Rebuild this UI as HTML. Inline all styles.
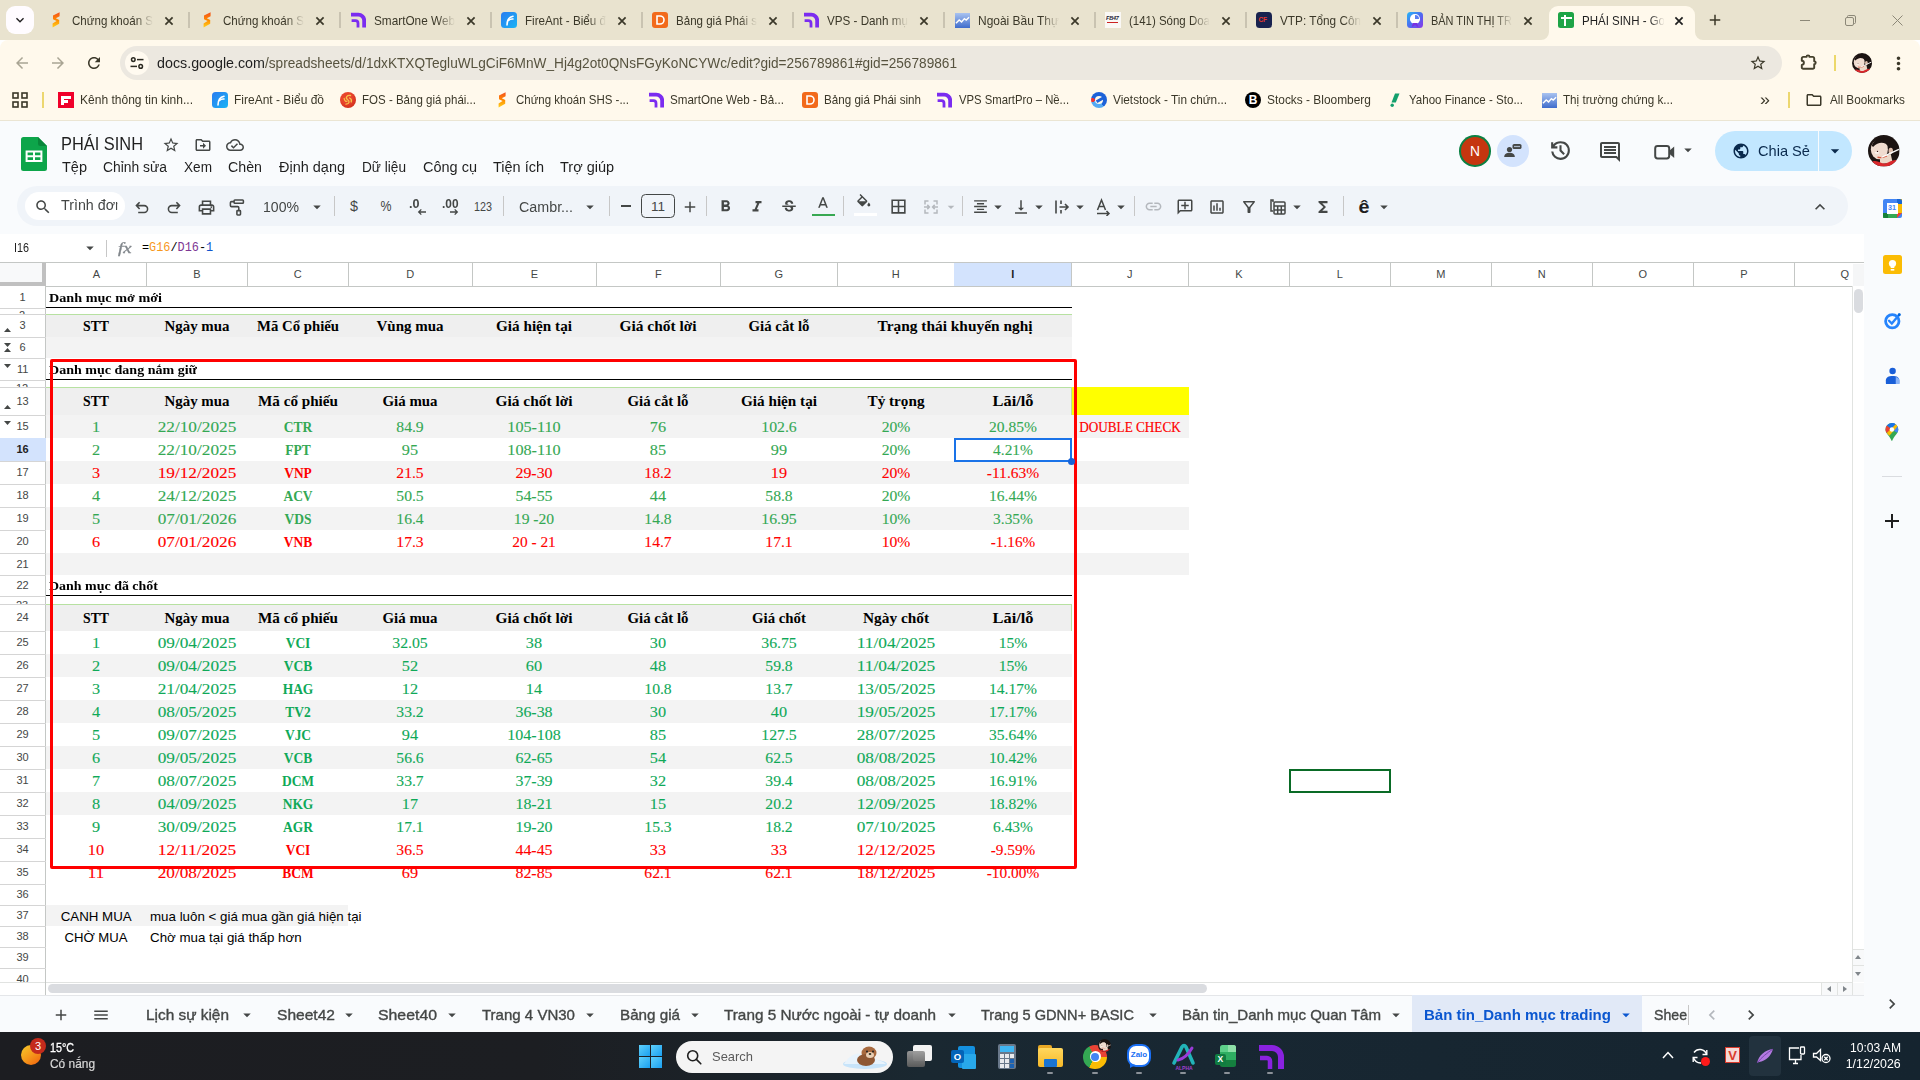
<!DOCTYPE html><html><head><meta charset="utf-8"><title>PHÁI SINH - Google Trang tính</title><style>html,body{margin:0;padding:0}body{width:1920px;height:1080px;overflow:hidden;position:relative;background:#fff;font-family:"Liberation Sans",sans-serif}.t{position:absolute;white-space:nowrap;line-height:1;display:block}</style></head><body><div style="position:absolute;left:0px;top:0px;width:1920px;height:40px;background:#e9e3cf"></div><div style="position:absolute;left:6px;top:6px;width:28px;height:28px;background:#fffcff;border-radius:9px"></div><svg style="position:absolute;left:12.0px;top:12.0px" width="16" height="16" viewBox="0 0 24 24" fill="#1f1f1f" ><path d="M16.59 8.59L12 13.17 7.41 8.59 6 10l6 6 6-6z"/></svg><svg style="position:absolute;left:48px;top:12px" width="16" height="16" viewBox="0 0 16 16"><defs><linearGradient id="sg48" x1="0" y1="0" x2="0" y2="1"><stop offset="0" stop-color="#f4511e"/><stop offset=".5" stop-color="#ff8a00"/><stop offset="1" stop-color="#ffd21f"/></linearGradient></defs><path d="M11.6 0.3 L5 3.6 V7.2 L8.6 8.9 L4.6 11.4 V15.6 L11.2 11.8 V8 L7.8 6.3 L11.6 4.2z" fill="url(#sg48)"/></svg><span class="t" style="font-family:'Liberation Sans',sans-serif;font-size:12.8px;font-weight:400;color:#3b3829;left:72px;top:14.9px;transform-origin:0 50%;transform:scaleX(0.903);padding:5px 0;margin-top:-5px;-webkit-mask-image:linear-gradient(90deg,#000 78%,transparent 100%);">Chứng khoán S</span><svg style="position:absolute;left:164px;top:15.5px" width="10" height="10" viewBox="164 15.5 10 10" ><path d="M165.4 16.9L172.6 24.1M172.6 16.9L165.4 24.1" stroke="#3b3829" stroke-width="1.7" fill="none"/></svg><div style="position:absolute;left:188px;top:12px;width:1.5px;height:16px;background:#c9c3b1"></div><svg style="position:absolute;left:199px;top:12px" width="16" height="16" viewBox="0 0 16 16"><defs><linearGradient id="sg199" x1="0" y1="0" x2="0" y2="1"><stop offset="0" stop-color="#f4511e"/><stop offset=".5" stop-color="#ff8a00"/><stop offset="1" stop-color="#ffd21f"/></linearGradient></defs><path d="M11.6 0.3 L5 3.6 V7.2 L8.6 8.9 L4.6 11.4 V15.6 L11.2 11.8 V8 L7.8 6.3 L11.6 4.2z" fill="url(#sg199)"/></svg><span class="t" style="font-family:'Liberation Sans',sans-serif;font-size:12.8px;font-weight:400;color:#3b3829;left:223px;top:14.9px;transform-origin:0 50%;transform:scaleX(0.903);padding:5px 0;margin-top:-5px;-webkit-mask-image:linear-gradient(90deg,#000 78%,transparent 100%);">Chứng khoán S</span><svg style="position:absolute;left:315px;top:15.5px" width="10" height="10" viewBox="315 15.5 10 10" ><path d="M316.4 16.9L323.6 24.1M323.6 16.9L316.4 24.1" stroke="#3b3829" stroke-width="1.7" fill="none"/></svg><div style="position:absolute;left:339px;top:12px;width:1.5px;height:16px;background:#c9c3b1"></div><svg style="position:absolute;left:350px;top:12px" width="16" height="16" viewBox="0 0 16 16" fill="none" stroke="#7b2cf0"><path d="M1 2.6 H8.2 a6 6 0 0 1 6 6 V15.5" stroke-width="3.9"/><path d="M1.6 8.6 H5.4 a2.6 2.6 0 0 1 2.6 2.6 V15.5" stroke-width="2.8"/></svg><span class="t" style="font-family:'Liberation Sans',sans-serif;font-size:12.8px;font-weight:400;color:#3b3829;left:374px;top:14.9px;transform-origin:0 50%;transform:scaleX(0.921);padding:5px 0;margin-top:-5px;-webkit-mask-image:linear-gradient(90deg,#000 78%,transparent 100%);">SmartOne Web</span><svg style="position:absolute;left:466px;top:15.5px" width="10" height="10" viewBox="466 15.5 10 10" ><path d="M467.4 16.9L474.6 24.1M474.6 16.9L467.4 24.1" stroke="#3b3829" stroke-width="1.7" fill="none"/></svg><div style="position:absolute;left:490px;top:12px;width:1.5px;height:16px;background:#c9c3b1"></div><div style="position:absolute;left:501px;top:12px;width:16px;height:16px;border-radius:3.5px;background:linear-gradient(135deg,#2a7cf0,#19b4f5)"><svg width="16" height="16" viewBox="0 0 16 16" fill="none" stroke="#fff" stroke-width="1.6" stroke-linecap="round"><path d="M6 13 C6 8 8 5 12 4.2"/><path d="M7.5 8.5 C9 7 10.5 6.8 12 7"/></svg></div><span class="t" style="font-family:'Liberation Sans',sans-serif;font-size:12.8px;font-weight:400;color:#3b3829;left:525px;top:14.9px;transform-origin:0 50%;transform:scaleX(0.911);padding:5px 0;margin-top:-5px;-webkit-mask-image:linear-gradient(90deg,#000 78%,transparent 100%);">FireAnt - Biểu đ</span><svg style="position:absolute;left:617px;top:15.5px" width="10" height="10" viewBox="617 15.5 10 10" ><path d="M618.4 16.9L625.6 24.1M625.6 16.9L618.4 24.1" stroke="#3b3829" stroke-width="1.7" fill="none"/></svg><div style="position:absolute;left:641px;top:12px;width:1.5px;height:16px;background:#c9c3b1"></div><div style="position:absolute;left:652px;top:12px;width:16px;height:16px;border-radius:3px;background:#f26a1b"><svg width="16" height="16" viewBox="0 0 16 16" fill="none" stroke="#fff" stroke-width="1.6"><path d="M5 4 H8 a4 4 0 0 1 0 8 H5 z"/></svg></div><span class="t" style="font-family:'Liberation Sans',sans-serif;font-size:12.8px;font-weight:400;color:#3b3829;left:676px;top:14.9px;transform-origin:0 50%;transform:scaleX(0.903);padding:5px 0;margin-top:-5px;-webkit-mask-image:linear-gradient(90deg,#000 78%,transparent 100%);">Bảng giá Phái s</span><svg style="position:absolute;left:768px;top:15.5px" width="10" height="10" viewBox="768 15.5 10 10" ><path d="M769.4 16.9L776.6 24.1M776.6 16.9L769.4 24.1" stroke="#3b3829" stroke-width="1.7" fill="none"/></svg><div style="position:absolute;left:792px;top:12px;width:1.5px;height:16px;background:#c9c3b1"></div><svg style="position:absolute;left:803px;top:12px" width="16" height="16" viewBox="0 0 16 16" fill="none" stroke="#7b2cf0"><path d="M1 2.6 H8.2 a6 6 0 0 1 6 6 V15.5" stroke-width="3.9"/><path d="M1.6 8.6 H5.4 a2.6 2.6 0 0 1 2.6 2.6 V15.5" stroke-width="2.8"/></svg><span class="t" style="font-family:'Liberation Sans',sans-serif;font-size:12.8px;font-weight:400;color:#3b3829;left:827px;top:14.9px;transform-origin:0 50%;transform:scaleX(0.911);padding:5px 0;margin-top:-5px;-webkit-mask-image:linear-gradient(90deg,#000 78%,transparent 100%);">VPS - Danh mụ</span><svg style="position:absolute;left:919px;top:15.5px" width="10" height="10" viewBox="919 15.5 10 10" ><path d="M920.4 16.9L927.6 24.1M927.6 16.9L920.4 24.1" stroke="#3b3829" stroke-width="1.7" fill="none"/></svg><div style="position:absolute;left:943px;top:12px;width:1.5px;height:16px;background:#c9c3b1"></div><div style="position:absolute;left:954.5px;top:12.5px;width:15px;height:15px;background:linear-gradient(180deg,#a9c3f0 0%,#3f6ccc 100%)"><svg width="15" height="15" viewBox="0 0 16 16" fill="none" stroke="#fff" stroke-width="1.5"><path d="M1 11 L4.5 7.5 L7 9.5 L10 6 L12 7.5 L15 4.5"/></svg></div><span class="t" style="font-family:'Liberation Sans',sans-serif;font-size:12.8px;font-weight:400;color:#3b3829;left:978px;top:14.9px;transform-origin:0 50%;transform:scaleX(0.935);padding:5px 0;margin-top:-5px;-webkit-mask-image:linear-gradient(90deg,#000 78%,transparent 100%);">Ngoài Bầu Thự</span><svg style="position:absolute;left:1070px;top:15.5px" width="10" height="10" viewBox="1070 15.5 10 10" ><path d="M1071.4 16.9L1078.6 24.1M1078.6 16.9L1071.4 24.1" stroke="#3b3829" stroke-width="1.7" fill="none"/></svg><div style="position:absolute;left:1094px;top:12px;width:1.5px;height:16px;background:#c9c3b1"></div><div style="position:absolute;left:1105px;top:12px;width:16px;height:16px;background:#faf8f5"><div style="position:absolute;left:1px;top:4px;width:14px;height:5px;font:bold 5.5px/5px 'Liberation Sans',sans-serif;color:#223;letter-spacing:-.2px;font-style:italic">FB47</div><div style="position:absolute;left:1.5px;top:10px;width:11px;height:1.3px;background:#c22"></div></div><span class="t" style="font-family:'Liberation Sans',sans-serif;font-size:12.8px;font-weight:400;color:#3b3829;left:1129px;top:14.9px;transform-origin:0 50%;transform:scaleX(0.896);padding:5px 0;margin-top:-5px;-webkit-mask-image:linear-gradient(90deg,#000 78%,transparent 100%);">(141) Sóng Doa</span><svg style="position:absolute;left:1221px;top:15.5px" width="10" height="10" viewBox="1221 15.5 10 10" ><path d="M1222.4 16.9L1229.6 24.1M1229.6 16.9L1222.4 24.1" stroke="#3b3829" stroke-width="1.7" fill="none"/></svg><div style="position:absolute;left:1245px;top:12px;width:1.5px;height:16px;background:#c9c3b1"></div><div style="position:absolute;left:1256px;top:12px;width:16px;height:16px;border-radius:3.5px;background:#18224f"><div style="position:absolute;left:2.5px;top:5px;width:11px;height:6px;font:bold 6.5px/6px 'Liberation Sans',sans-serif;color:#e8392f;letter-spacing:-.2px">CF</div></div><span class="t" style="font-family:'Liberation Sans',sans-serif;font-size:12.8px;font-weight:400;color:#3b3829;left:1280px;top:14.9px;transform-origin:0 50%;transform:scaleX(0.921);padding:5px 0;margin-top:-5px;-webkit-mask-image:linear-gradient(90deg,#000 78%,transparent 100%);">VTP: Tổng Côn</span><svg style="position:absolute;left:1372px;top:15.5px" width="10" height="10" viewBox="1372 15.5 10 10" ><path d="M1373.4 16.9L1380.6 24.1M1380.6 16.9L1373.4 24.1" stroke="#3b3829" stroke-width="1.7" fill="none"/></svg><div style="position:absolute;left:1396px;top:12px;width:1.5px;height:16px;background:#c9c3b1"></div><div style="position:absolute;left:1407px;top:12px;width:16px;height:16px;border-radius:3.5px;background:linear-gradient(135deg,#25b9f6 0%,#4d6cf0 50%,#8a35e8 100%)"><div style="position:absolute;left:3.2px;top:2px;width:9.6px;height:9.6px;border-radius:50%;background:#fff"></div><div style="position:absolute;left:8px;top:2.8px;width:4px;height:4px;border-radius:0 4px 0 0;background:#5a7df2"></div><div style="position:absolute;left:4.5px;top:11px;width:7px;height:4.5px;background:#7a30e0;clip-path:polygon(20% 0,80% 0,100% 100%,50% 45%,0 100%)"></div></div><span class="t" style="font-family:'Liberation Sans',sans-serif;font-size:12.8px;font-weight:400;color:#3b3829;left:1431px;top:14.9px;transform-origin:0 50%;transform:scaleX(0.856);padding:5px 0;margin-top:-5px;-webkit-mask-image:linear-gradient(90deg,#000 78%,transparent 100%);">BẢN TIN THỊ TR</span><svg style="position:absolute;left:1523px;top:15.5px" width="10" height="10" viewBox="1523 15.5 10 10" ><path d="M1524.4 16.9L1531.6 24.1M1531.6 16.9L1524.4 24.1" stroke="#3b3829" stroke-width="1.7" fill="none"/></svg><div style="position:absolute;left:1549px;top:6px;width:146px;height:34px;background:#fff9ec;border-radius:9px 9px 0 0"></div><svg style="position:absolute;left:1541px;top:32px" width="8" height="8"><path d="M8 0 V8 H0 A8 8 0 0 0 8 0z" fill="#fff9ec"/></svg><svg style="position:absolute;left:1695px;top:32px" width="8" height="8"><path d="M0 0 V8 H8 A8 8 0 0 1 0 0z" fill="#fff9ec"/></svg><div style="position:absolute;left:1558px;top:12px;width:16px;height:16px;border-radius:2.5px;background:#1ea446"><div style="position:absolute;left:2.5px;top:5px;width:11px;height:2.2px;background:#fff"></div><div style="position:absolute;left:6.2px;top:2.5px;width:2.2px;height:11px;background:#fff"></div></div><span class="t" style="font-family:'Liberation Sans',sans-serif;font-size:12.8px;font-weight:400;color:#1f1f1f;left:1582px;top:14.9px;transform-origin:0 50%;transform:scaleX(0.898);padding:5px 0;margin-top:-5px;-webkit-mask-image:linear-gradient(90deg,#000 82%,transparent 100%);">PHÁI SINH - Go</span><svg style="position:absolute;left:1674px;top:15.5px" width="10" height="10" viewBox="1674 15.5 10 10" ><path d="M1675.4 16.9L1682.6 24.1M1682.6 16.9L1675.4 24.1" stroke="#1f1f1f" stroke-width="1.7" fill="none"/></svg><svg style="position:absolute;left:1706.0px;top:11.0px" width="18" height="18" viewBox="0 0 24 24" fill="#3b3829" ><path d="M19 13h-6v6h-2v-6H5v-2h6V5h2v6h6v2z"/></svg><div style="position:absolute;left:1800px;top:19.5px;width:10px;height:1px;background:#8c8878"></div><svg style="position:absolute;left:1845px;top:15px" width="11" height="11" fill="none" stroke="#8c8878" stroke-width="1"><rect x="0.5" y="2.5" width="8" height="8" rx="1.5"/><path d="M2.5 2.5 V1.5 a1 1 0 0 1 1 -1 H9 a1.5 1.5 0 0 1 1.5 1.5 V7.5 a1 1 0 0 1 -1 1 H8.5"/></svg><svg style="position:absolute;left:1892px;top:15px" width="11" height="11" fill="none" stroke="#8c8878" stroke-width="1"><path d="M0.5 0.5 L10.5 10.5 M10.5 0.5 L0.5 10.5"/></svg><div style="position:absolute;left:0px;top:40px;width:1920px;height:80px;background:#fff9ec;border-radius:8px 8px 0 0"></div><svg style="position:absolute;left:13.0px;top:54.0px" width="18" height="18" viewBox="0 0 24 24" fill="#a9a594" ><path d="M20 11H7.83l5.59-5.59L12 4l-8 8 8 8 1.41-1.41L7.83 13H20v-2z"/></svg><svg style="position:absolute;left:49.0px;top:54.0px" width="18" height="18" viewBox="0 0 24 24" fill="#a9a594" ><path d="M12 4l-1.41 1.41L16.17 11H4v2h12.17l-5.58 5.59L12 20l8-8z"/></svg><svg style="position:absolute;left:85.0px;top:54.0px" width="18" height="18" viewBox="0 0 24 24" fill="#3b3829" ><path d="M17.65 6.35C16.2 4.9 14.21 4 12 4c-4.42 0-7.99 3.58-7.99 8s3.57 8 7.99 8c3.73 0 6.84-2.55 7.73-6h-2.08c-.82 2.33-3.04 4-5.65 4-3.31 0-6-2.69-6-6s2.69-6 6-6c1.66 0 3.14.69 4.22 1.78L13 11h7V4l-2.35 2.35z"/></svg><div style="position:absolute;left:120px;top:46px;width:1662px;height:34px;background:#ece8e0;border-radius:17px"></div><div style="position:absolute;left:125px;top:51px;width:24px;height:24px;background:#fffaf0;border-radius:12px"></div><svg style="position:absolute;left:129px;top:55px" width="16" height="16" viewBox="0 0 16 16" fill="none" stroke="#2b2a22" stroke-width="1.5"><circle cx="4.3" cy="4.6" r="1.8"/><path d="M8 4.6H14.5"/><circle cx="11.7" cy="11.4" r="1.8"/><path d="M1.5 11.4H8"/></svg><span class="t" style="font-family:'Liberation Sans',sans-serif;font-size:14px;font-weight:400;color:#1f1f1f;left:157px;top:56.4px;transform-origin:0 50%;transform:scaleX(1.020);">docs.google.com</span><span class="t" style="font-family:'Liberation Sans',sans-serif;font-size:14px;font-weight:400;color:#57533f;left:265px;top:56.4px;transform-origin:0 50%;transform:scaleX(0.975);">/spreadsheets/d/1dxKTXQTegluWLgCiF6MnW_Hj4g2ot0QNsFGyKoNCYWc/edit?gid=256789861#gid=256789861</span><svg style="position:absolute;left:1749.0px;top:54.0px" width="18" height="18" viewBox="0 0 24 24" fill="#3b3829" ><path d="M22 9.24l-7.19-.62L12 2 9.19 8.63 2 9.24l5.46 4.73L5.82 21 12 17.27 18.18 21l-1.63-7.03L22 9.24zM12 15.4l-3.76 2.27 1-4.28-3.32-2.88 4.38-.38L12 6.1l1.71 4.04 4.38.38-3.32 2.88 1 4.28L12 15.4z"/></svg><svg style="position:absolute;left:1799px;top:52px" width="20" height="20" viewBox="1799 52 20 20" ><path d="M1803.2 56.9H1806.5A1.5 1.5 0 0 1 1809.5 56.9H1812.8A1.4 1.4 0 0 1 1814.2 58.3V61.3A1.5 1.5 0 0 1 1814.2 64.3V67.4A1.4 1.4 0 0 1 1812.8 68.8H1803.2A1.4 1.4 0 0 1 1801.8 67.4V64.9A2.1 2.1 0 0 0 1801.8 60.7V58.3A1.4 1.4 0 0 1 1803.2 56.9z" fill="none" stroke="#45412d" stroke-width="1.9" stroke-linejoin="round"/></svg><div style="position:absolute;left:1834.2px;top:55px;width:1.5px;height:16px;background:#ecd86a"></div><svg style="position:absolute;left:1852px;top:53px" width="20" height="20" viewBox="0 0 100 100"><defs><clipPath id="av1862_63"><circle cx="50" cy="50" r="50"/></clipPath></defs><g clip-path="url(#av1862_63)"><rect width="100" height="100" fill="#1d1513"/><ellipse cx="36" cy="46" rx="27" ry="31" fill="#f0dcd0"/><path d="M12 34 C22 4 70 -6 92 28 C102 48 100 66 88 76 C84 58 76 40 56 28 C44 22 30 24 16 38z" fill="#1b1311"/><ellipse cx="72" cy="50" rx="7" ry="10" fill="#dcbcaa"/><path d="M38 66 L72 60 L78 88 L38 92z" fill="#ecd8c8"/><path d="M10 86 C28 74 42 94 56 90 C68 86 80 76 94 80 L100 100 L0 100z" fill="#da282c"/><path d="M30 70 C42 74 52 70 60 66" stroke="#d9583f" stroke-width="4" fill="none"/><path d="M44 70 L96 46" stroke="#fdfdfd" stroke-width="4.5" stroke-linecap="round"/><ellipse cx="28" cy="56" rx="7" ry="3" fill="#fbf3ee"/><circle cx="30" cy="52" r="2" fill="#3a1a1a"/></g></svg><svg style="position:absolute;left:1887.5px;top:52.5px" width="21" height="21" viewBox="0 0 24 24" fill="#3b3829" ><path d="M12 8c1.1 0 2-.9 2-2s-.9-2-2-2-2 .9-2 2 .9 2 2 2zm0 2c-1.1 0-2 .9-2 2s.9 2 2 2 2-.9 2-2-.9-2-2-2zm0 6c-1.1 0-2 .9-2 2s.9 2 2 2 2-.9 2-2-.9-2-2-2z"/></svg><svg style="position:absolute;left:12px;top:92px" width="16" height="16" viewBox="0 0 16 16" fill="none" stroke="#3b3829" stroke-width="1.6"><rect x="1" y="1" width="5" height="5"/><rect x="10" y="1" width="5" height="5"/><rect x="1" y="10" width="5" height="5"/><rect x="10" y="10" width="5" height="5"/></svg><div style="position:absolute;left:42px;top:92px;width:1.5px;height:16px;background:#ecd76f"></div><div style="position:absolute;left:58px;top:92px;width:16px;height:16px;background:#f0002a"><div style="position:absolute;left:3px;top:3.5px;width:10px;height:3px;background:#fff"></div><div style="position:absolute;left:3px;top:3.5px;width:3.2px;height:9px;background:#fff"></div><div style="position:absolute;left:3px;top:8px;width:7px;height:2.6px;background:#fff"></div></div><span class="t" style="font-family:'Liberation Sans',sans-serif;font-size:12.8px;font-weight:400;color:#3b3829;left:80px;top:94.2px;transform-origin:0 50%;transform:scaleX(0.940);">Kênh thông tin kinh...</span><div style="position:absolute;left:212px;top:92px;width:16px;height:16px;border-radius:3.5px;background:linear-gradient(135deg,#2a7cf0,#19b4f5)"><svg width="16" height="16" viewBox="0 0 16 16" fill="none" stroke="#fff" stroke-width="1.6" stroke-linecap="round"><path d="M6 13 C6 8 8 5 12 4.2"/><path d="M7.5 8.5 C9 7 10.5 6.8 12 7"/></svg></div><span class="t" style="font-family:'Liberation Sans',sans-serif;font-size:12.8px;font-weight:400;color:#3b3829;left:234px;top:94.2px;transform-origin:0 50%;transform:scaleX(0.937);">FireAnt - Biểu đồ</span><div style="position:absolute;left:340px;top:92px;width:16px;height:16px;border-radius:50%;background:radial-gradient(circle at 40% 35%,#e8452c 0 40%,#c3200f 100%)"><svg width="16" height="16" viewBox="0 0 16 16" fill="none" stroke="#f6c34a" stroke-width="1.3" stroke-linecap="round"><path d="M10.5 3.5 C7 3 5 5.5 7.5 7.5 C10 9.3 9.5 12 6 12.2"/><path d="M4.2 6.5 C4.5 9 6 9.5 7 9.2M9.5 6 C11 6.5 11.8 8 11.2 10"/></svg></div><span class="t" style="font-family:'Liberation Sans',sans-serif;font-size:12.8px;font-weight:400;color:#3b3829;left:362px;top:94.2px;transform-origin:0 50%;transform:scaleX(0.900);">FOS - Bảng giá phái...</span><svg style="position:absolute;left:494px;top:92px" width="16" height="16" viewBox="0 0 16 16"><defs><linearGradient id="sg494" x1="0" y1="0" x2="0" y2="1"><stop offset="0" stop-color="#f4511e"/><stop offset=".5" stop-color="#ff8a00"/><stop offset="1" stop-color="#ffd21f"/></linearGradient></defs><path d="M11.6 0.3 L5 3.6 V7.2 L8.6 8.9 L4.6 11.4 V15.6 L11.2 11.8 V8 L7.8 6.3 L11.6 4.2z" fill="url(#sg494)"/></svg><span class="t" style="font-family:'Liberation Sans',sans-serif;font-size:12.8px;font-weight:400;color:#3b3829;left:516px;top:94.2px;transform-origin:0 50%;transform:scaleX(0.897);">Chứng khoán SHS -...</span><svg style="position:absolute;left:648px;top:92px" width="16" height="16" viewBox="0 0 16 16" fill="none" stroke="#7b2cf0"><path d="M1 2.6 H8.2 a6 6 0 0 1 6 6 V15.5" stroke-width="3.9"/><path d="M1.6 8.6 H5.4 a2.6 2.6 0 0 1 2.6 2.6 V15.5" stroke-width="2.8"/></svg><span class="t" style="font-family:'Liberation Sans',sans-serif;font-size:12.8px;font-weight:400;color:#3b3829;left:670px;top:94.2px;transform-origin:0 50%;transform:scaleX(0.907);">SmartOne Web - Bả...</span><div style="position:absolute;left:802px;top:92px;width:16px;height:16px;border-radius:3px;background:#f26a1b"><svg width="16" height="16" viewBox="0 0 16 16" fill="none" stroke="#fff" stroke-width="1.6"><path d="M5 4 H8 a4 4 0 0 1 0 8 H5 z"/></svg></div><span class="t" style="font-family:'Liberation Sans',sans-serif;font-size:12.8px;font-weight:400;color:#3b3829;left:824px;top:94.2px;transform-origin:0 50%;transform:scaleX(0.909);">Bảng giá Phái sinh</span><svg style="position:absolute;left:936px;top:92px" width="16" height="16" viewBox="0 0 16 16" fill="none" stroke="#7b2cf0"><path d="M1 2.6 H8.2 a6 6 0 0 1 6 6 V15.5" stroke-width="3.9"/><path d="M1.6 8.6 H5.4 a2.6 2.6 0 0 1 2.6 2.6 V15.5" stroke-width="2.8"/></svg><span class="t" style="font-family:'Liberation Sans',sans-serif;font-size:12.8px;font-weight:400;color:#3b3829;left:959px;top:94.2px;transform-origin:0 50%;transform:scaleX(0.884);">VPS SmartPro – Nề...</span><div style="position:absolute;left:1091px;top:92px;width:16px;height:16px;border-radius:50%;background:conic-gradient(#1d62d8 0 40%,#54a9f3 40% 70%,#e33 70% 80%,#1d62d8 80%)"><div style="position:absolute;left:4px;top:4px;width:8px;height:8px;border-radius:50%;background:#fff9ec"></div><div style="position:absolute;left:5px;top:6px;width:9px;height:3px;background:#1d62d8;transform:rotate(-30deg)"></div></div><span class="t" style="font-family:'Liberation Sans',sans-serif;font-size:12.8px;font-weight:400;color:#3b3829;left:1113px;top:94.2px;transform-origin:0 50%;transform:scaleX(0.923);">Vietstock - Tin chứn...</span><div style="position:absolute;left:1245px;top:92px;width:16px;height:16px;border-radius:50%;background:#000;color:#fff;font:bold 12px/16px 'Liberation Sans',sans-serif;text-align:center">B</div><span class="t" style="font-family:'Liberation Sans',sans-serif;font-size:12.8px;font-weight:400;color:#3b3829;left:1267px;top:94.2px;transform-origin:0 50%;transform:scaleX(0.931);">Stocks - Bloomberg</span><svg style="position:absolute;left:1387px;top:92px" width="16" height="16" viewBox="0 0 16 16"><path d="M8 1.5 H12.5 L8.8 10.5 H4.5z" fill="#14a06c"/><circle cx="5.2" cy="13.3" r="1.7" fill="#14a06c"/></svg><span class="t" style="font-family:'Liberation Sans',sans-serif;font-size:12.8px;font-weight:400;color:#3b3829;left:1409px;top:94.2px;transform-origin:0 50%;transform:scaleX(0.902);">Yahoo Finance - Sto...</span><div style="position:absolute;left:1541.5px;top:92.5px;width:15px;height:15px;background:linear-gradient(180deg,#a9c3f0 0%,#3f6ccc 100%)"><svg width="15" height="15" viewBox="0 0 16 16" fill="none" stroke="#fff" stroke-width="1.5"><path d="M1 11 L4.5 7.5 L7 9.5 L10 6 L12 7.5 L15 4.5"/></svg></div><span class="t" style="font-family:'Liberation Sans',sans-serif;font-size:12.8px;font-weight:400;color:#3b3829;left:1563px;top:94.2px;transform-origin:0 50%;transform:scaleX(0.910);">Thị trường chứng k...</span><span class="t" style="font-family:'Liberation Sans',sans-serif;font-size:17px;font-weight:400;color:#3b3829;left:1760px;top:90.5px;transform-origin:0 50%;transform:scaleX(1.056);">»</span><div style="position:absolute;left:1788px;top:92px;width:1.5px;height:16px;background:#ecd76f"></div><svg style="position:absolute;left:1805.0px;top:91.0px" width="18" height="18" viewBox="0 0 24 24" fill="#3b3829" ><path d="M9.17 6l2 2H20v10H4V6h5.17M10 4H4c-1.1 0-1.99.9-1.99 2L2 18c0 1.1.9 2 2 2h16c1.1 0 2-.9 2-2V8c0-1.1-.9-2-2-2h-8l-2-2z"/></svg><span class="t" style="font-family:'Liberation Sans',sans-serif;font-size:12.8px;font-weight:400;color:#3b3829;left:1830px;top:94.2px;transform-origin:0 50%;transform:scaleX(0.917);">All Bookmarks</span><div style="position:absolute;left:0px;top:120px;width:1920px;height:1px;background:#ebe5d3"></div><div style="position:absolute;left:0px;top:121px;width:1920px;height:911px;background:#f9fbfd"></div><svg style="position:absolute;left:21px;top:137px" width="26" height="34" viewBox="0 0 26 34"><path d="M2.5 0 H17 L26 9 V31.5 a2.5 2.5 0 0 1 -2.5 2.5 H2.5 A2.5 2.5 0 0 1 0 31.5 V2.5 A2.5 2.5 0 0 1 2.5 0z" fill="#0da54a"/><path d="M17 0 L26 9 H19.5 A2.5 2.5 0 0 1 17 6.5z" fill="#08873a"/><path d="M4.6 13.4 H21.4 V25 H4.6z M6.6 15.4 V18.2 H12 V15.4z M14 15.4 V18.2 H19.4 V15.4z M6.6 20.2 V23 H12 V20.2z M14 20.2 V23 H19.4 V20.2z" fill="#fff" fill-rule="evenodd"/></svg><span class="t" style="font-family:'Liberation Sans',sans-serif;font-size:18px;font-weight:400;color:#1f1f1f;left:61px;top:135px;transform-origin:0 50%;transform:scaleX(0.911);">PHÁI SINH</span><svg style="position:absolute;left:162.0px;top:136.0px" width="18" height="18" viewBox="0 0 24 24" fill="#444746" ><path d="M22 9.24l-7.19-.62L12 2 9.19 8.63 2 9.24l5.46 4.73L5.82 21 12 17.27 18.18 21l-1.63-7.03L22 9.24zM12 15.4l-3.76 2.27 1-4.28-3.32-2.88 4.38-.38L12 6.1l1.71 4.04 4.38.38-3.32 2.88 1 4.28L12 15.4z"/></svg><svg style="position:absolute;left:194.0px;top:136.0px" width="18" height="18" viewBox="0 0 24 24" fill="#444746" ><path d="M20 6h-8l-2-2H4c-1.1 0-2 .9-2 2v12c0 1.1.9 2 2 2h16c1.1 0 2-.9 2-2V8c0-1.1-.9-2-2-2zm0 12H4V6h5.17l2 2H20v10zm-8-1l4-4-4-4v3H8v2h4v3z"/></svg><svg style="position:absolute;left:226.0px;top:136.0px" width="18" height="18" viewBox="0 0 24 24" fill="#444746" ><path d="M19.35 10.04C18.67 6.59 15.64 4 12 4 9.11 4 6.6 5.64 5.35 8.04 2.34 8.36 0 10.91 0 14c0 3.31 2.69 6 6 6h13c2.76 0 5-2.24 5-5 0-2.64-2.05-4.78-4.65-4.96zM19 18H6c-2.21 0-4-1.79-4-4 0-2.05 1.53-3.76 3.56-3.97l1.07-.11.5-.95C8.08 7.14 9.94 6 12 6c2.62 0 4.88 1.86 5.39 4.43l.3 1.5 1.53.11c1.56.1 2.78 1.41 2.78 2.96 0 1.65-1.35 3-3 3zm-9-3.82l-2.09-2.09L6.5 13.5 10 17l6.01-6.01-1.41-1.41z"/></svg><span class="t" style="font-family:'Liberation Sans',sans-serif;font-size:14px;font-weight:400;color:#1f1f1f;left:62px;top:160px;transform-origin:0 50%;transform:scaleX(1.036);">Tệp</span><span class="t" style="font-family:'Liberation Sans',sans-serif;font-size:14px;font-weight:400;color:#1f1f1f;left:103px;top:160px;transform-origin:0 50%;transform:scaleX(0.990);">Chỉnh sửa</span><span class="t" style="font-family:'Liberation Sans',sans-serif;font-size:14px;font-weight:400;color:#1f1f1f;left:184px;top:160px;transform-origin:0 50%;transform:scaleX(0.972);">Xem</span><span class="t" style="font-family:'Liberation Sans',sans-serif;font-size:14px;font-weight:400;color:#1f1f1f;left:228px;top:160px;transform-origin:0 50%;transform:scaleX(1.016);">Chèn</span><span class="t" style="font-family:'Liberation Sans',sans-serif;font-size:14px;font-weight:400;color:#1f1f1f;left:279px;top:160px;transform-origin:0 50%;transform:scaleX(1.034);">Định dạng</span><span class="t" style="font-family:'Liberation Sans',sans-serif;font-size:14px;font-weight:400;color:#1f1f1f;left:362px;top:160px;transform-origin:0 50%;transform:scaleX(0.974);">Dữ liệu</span><span class="t" style="font-family:'Liberation Sans',sans-serif;font-size:14px;font-weight:400;color:#1f1f1f;left:423px;top:160px;transform-origin:0 50%;transform:scaleX(1.035);">Công cụ</span><span class="t" style="font-family:'Liberation Sans',sans-serif;font-size:14px;font-weight:400;color:#1f1f1f;left:493px;top:160px;transform-origin:0 50%;transform:scaleX(1.035);">Tiện ích</span><span class="t" style="font-family:'Liberation Sans',sans-serif;font-size:14px;font-weight:400;color:#1f1f1f;left:560px;top:160px;transform-origin:0 50%;transform:scaleX(1.034);">Trợ giúp</span><div style="position:absolute;left:1459.3px;top:135px;width:31.6px;height:31.6px;background:#0b8043;border-radius:50%"></div><div style="position:absolute;left:1461px;top:136.7px;width:28.2px;height:28.2px;background:#c5360f;border-radius:50%"></div><span class="t" style="font-family:'Liberation Sans',sans-serif;font-size:14px;font-weight:400;color:#fff;left:1475.1px;top:144.3px;transform-origin:50% 50%;transform:translateX(-50%) scaleX(0.988);">N</span><div style="position:absolute;left:1497px;top:135px;width:32px;height:32px;background:#d3e3fd;border-radius:50%"></div><svg style="position:absolute;left:1503px;top:141px" width="20" height="20" viewBox="0 0 20 20" fill="#444746"><circle cx="6.5" cy="8.5" r="2.6"/><path d="M1.2 16 c0-3 2.6-4.2 5.3-4.2 s5.3 1.2 5.3 4.2z"/><rect x="9.5" y="3" width="9" height="5" rx="1.6"/><circle cx="12" cy="5.5" r=".8" fill="#d3e3fd"/><circle cx="14" cy="5.5" r=".8" fill="#d3e3fd"/><circle cx="16" cy="5.5" r=".8" fill="#d3e3fd"/></svg><svg style="position:absolute;left:1547.8px;top:138.3px" width="25" height="25" viewBox="0 0 24 24" fill="#444746" ><path d="M12 21q-3.45 0-6.012-2.287T3.05 13H5.1q.35 2.6 2.313 4.3T12 19q2.925 0 4.963-2.037T19 12q0-2.925-2.037-4.963T12 5q-1.725 0-3.225.8T6.25 8H9v2H3V4h2v2.35q1.275-1.6 3.113-2.475T12 3q1.875 0 3.513.713t2.85 1.924q1.212 1.213 1.925 2.85T21 12q0 1.875-.713 3.513t-1.924 2.85q-1.213 1.212-2.85 1.925T12 21Zm2.8-4.8L11 12.4V7h2v4.6l3.2 3.2-1.4 1.4Z"/></svg><svg style="position:absolute;left:1598.0px;top:140.0px" width="24" height="24" viewBox="0 0 24 24" fill="#444746" ><path d="M21.99 4c0-1.1-.89-2-1.99-2H4c-1.1 0-2 .9-2 2v12c0 1.1.9 2 2 2h14l4 4-.01-18zM20 4v13.17L18.83 16H4V4h16zM6 12h12v2H6zm0-3h12v2H6zm0-3h12v2H6z"/></svg><svg style="position:absolute;left:1652px;top:143px" width="25" height="18" viewBox="1652 143 25 18" ><rect x="1655.2" y="146" width="14" height="12.4" rx="2.4" fill="none" stroke="#444746" stroke-width="2"/><path d="M1669.6 150.4L1674.2 146.4V158L1669.6 154z" fill="#444746"/></svg><svg style="position:absolute;left:1679.0px;top:141.0px" width="18" height="18" viewBox="0 0 24 24" fill="#444746" ><path d="M7 10l5 5 5-5z"/></svg><div style="position:absolute;left:1715px;top:131px;width:137px;height:40px;background:#c2e7ff;border-radius:20px"></div><div style="position:absolute;left:1817.8px;top:131px;width:1px;height:40px;background:#f9fbfd"></div><svg style="position:absolute;left:1732.0px;top:142.0px" width="18" height="18" viewBox="0 0 24 24" fill="#0a2a4d" ><path d="M12 2C6.48 2 2 6.48 2 12s4.48 10 10 10 10-4.48 10-10S17.52 2 12 2zm-1 17.93c-3.95-.49-7-3.85-7-7.93 0-.62.08-1.21.21-1.79L9 15v1c0 1.1.9 2 2 2v1.93zm6.9-2.54c-.26-.81-1-1.39-1.9-1.39h-1v-3c0-.55-.45-1-1-1H8v-2h2c.55 0 1-.45 1-1V7h2c1.1 0 2-.9 2-2v-.41c2.93 1.19 5 4.06 5 7.41 0 2.08-.8 3.97-2.1 5.39z"/></svg><span class="t" style="font-family:'Liberation Sans',sans-serif;font-size:14.5px;font-weight:500;color:#0a2a4d;left:1758px;top:143.75px;transform-origin:0 50%;transform:scaleX(1.008);">Chia Sẻ</span><svg style="position:absolute;left:1825.0px;top:141.0px" width="20" height="20" viewBox="0 0 24 24" fill="#0a2a4d" ><path d="M7 10l5 5 5-5z"/></svg><svg style="position:absolute;left:1868.3px;top:135.2px" width="31.6" height="31.6" viewBox="0 0 100 100"><defs><clipPath id="av1884_151"><circle cx="50" cy="50" r="50"/></clipPath></defs><g clip-path="url(#av1884_151)"><rect width="100" height="100" fill="#1d1513"/><ellipse cx="36" cy="46" rx="27" ry="31" fill="#f0dcd0"/><path d="M12 34 C22 4 70 -6 92 28 C102 48 100 66 88 76 C84 58 76 40 56 28 C44 22 30 24 16 38z" fill="#1b1311"/><ellipse cx="72" cy="50" rx="7" ry="10" fill="#dcbcaa"/><path d="M38 66 L72 60 L78 88 L38 92z" fill="#ecd8c8"/><path d="M10 86 C28 74 42 94 56 90 C68 86 80 76 94 80 L100 100 L0 100z" fill="#da282c"/><path d="M30 70 C42 74 52 70 60 66" stroke="#d9583f" stroke-width="4" fill="none"/><path d="M44 70 L96 46" stroke="#fdfdfd" stroke-width="4.5" stroke-linecap="round"/><ellipse cx="28" cy="56" rx="7" ry="3" fill="#fbf3ee"/><circle cx="30" cy="52" r="2" fill="#3a1a1a"/></g></svg><div style="position:absolute;left:17px;top:186px;width:1831px;height:40px;background:#f0f4f9;border-radius:20px"></div><div style="position:absolute;left:25px;top:192px;width:100px;height:28px;background:#fff;border-radius:14px"></div><svg style="position:absolute;left:34.0px;top:197.5px" width="18" height="18" viewBox="0 0 24 24" fill="#444746" ><path d="M15.5 14h-.79l-.28-.27C15.41 12.59 16 11.11 16 9.5 16 5.91 13.09 3 9.5 3S3 5.91 3 9.5 5.91 16 9.5 16c1.61 0 3.09-.59 4.23-1.57l.27.28v.79l5 4.99L20.49 19l-4.99-5zm-6 0C7.01 14 5 11.99 5 9.5S7.01 5 9.5 5 14 7.01 14 9.5 11.99 14 9.5 14z"/></svg><span class="t" style="font-family:'Liberation Sans',sans-serif;font-size:14px;font-weight:400;color:#444746;left:61px;top:198.4px;transform-origin:0 50%;transform:scaleX(1.020);clip-path:inset(-5px 5.5px -5px 0);">Trình đơn</span><svg style="position:absolute;left:134px;top:198px" width="16" height="18" viewBox="134 198 16 18" ><path d="M139.6 202.2L136.4 205.6L139.6 209M136.6 205.6H144.2A3.4 3.4 0 0 1 144.2 212.4H138.2" fill="none" stroke="#444746" stroke-width="1.55"/></svg><svg style="position:absolute;left:166px;top:198px" width="16" height="18" viewBox="166 198 16 18" ><path d="M176.4 202.2L179.6 205.6L176.4 209M179.4 205.6H171.8A3.4 3.4 0 0 0 171.8 212.4H177.8" fill="none" stroke="#444746" stroke-width="1.55"/></svg><svg style="position:absolute;left:196.5px;top:197.5px" width="19" height="19" viewBox="0 0 24 24" fill="#444746" ><path d="M19 8h-1V3H6v5H5c-1.66 0-3 1.34-3 3v6h4v4h12v-4h4v-6c0-1.66-1.34-3-3-3zM8 5h8v3H8V5zm8 12v2H8v-4h8v2zm2-2v-2H6v2H4v-4c0-.55.45-1 1-1h14c.55 0 1 .45 1 1v4h-2zM18 10.5a1 1 0 1 0 .001 0z"/></svg><svg style="position:absolute;left:228px;top:197px" width="18" height="20" viewBox="228 197 18 20" ><rect x="234.1" y="199.9" width="9.3" height="3.3" rx=".8" fill="none" stroke="#444746" stroke-width="1.55"/><path d="M234 201.6H231.6A1.2 1.2 0 0 0 230.4 202.8V205.4A1.2 1.2 0 0 0 231.6 206.6H237.6A1.2 1.2 0 0 1 238.8 207.8V210.4" fill="none" stroke="#444746" stroke-width="1.55"/><rect x="236.9" y="210.6" width="3.6" height="4.4" rx=".7" fill="none" stroke="#444746" stroke-width="1.55"/></svg><span class="t" style="font-family:'Liberation Sans',sans-serif;font-size:14px;font-weight:400;color:#444746;left:263px;top:200px;transform-origin:0 50%;transform:scaleX(1.005);">100%</span><svg style="position:absolute;left:308.0px;top:197.7px" width="18" height="18" viewBox="0 0 24 24" fill="#444746" ><path d="M7 10l5 5 5-5z"/></svg><div style="position:absolute;left:334px;top:196px;width:1px;height:20px;background:#c7c7c7"></div><span class="t" style="font-family:'Liberation Sans',sans-serif;font-size:14px;font-weight:400;color:#444746;left:354px;top:199px;transform-origin:50% 50%;transform:translateX(-50%) scaleX(1.026);">$</span><span class="t" style="font-family:'Liberation Sans',sans-serif;font-size:14px;font-weight:400;color:#444746;left:386px;top:199px;transform-origin:50% 50%;transform:translateX(-50%) scaleX(0.883);">%</span><span class="t" style="font-family:'Liberation Sans',sans-serif;font-size:12px;font-weight:700;color:#444746;left:409.3px;top:198.2px;transform-origin:0 50%;transform:scaleX(1.048);">.0</span><svg style="position:absolute;left:417px;top:208px" width="10" height="8" viewBox="417 208 10 8" ><path d="M426 212H418.8M421.3 209.4L418.7 212L421.3 214.6" fill="none" stroke="#444746" stroke-width="1.3"/></svg><span class="t" style="font-family:'Liberation Sans',sans-serif;font-size:12px;font-weight:700;color:#444746;left:441.5px;top:198.2px;transform-origin:0 50%;transform:scaleX(0.989);">.00</span><svg style="position:absolute;left:449px;top:208px" width="10" height="8" viewBox="449 208 10 8" ><path d="M450 212H457.2M454.7 209.4L457.3 212L454.7 214.6" fill="none" stroke="#444746" stroke-width="1.3"/></svg><span class="t" style="font-family:'Liberation Sans',sans-serif;font-size:12px;font-weight:400;color:#444746;left:483px;top:200.5px;transform-origin:50% 50%;transform:translateX(-50%) scaleX(0.899);">123</span><div style="position:absolute;left:503px;top:196px;width:1px;height:20px;background:#c7c7c7"></div><span class="t" style="font-family:'Liberation Sans',sans-serif;font-size:14px;font-weight:400;color:#444746;left:519px;top:200px;transform-origin:0 50%;transform:scaleX(1.021);">Cambr...</span><svg style="position:absolute;left:581.0px;top:197.7px" width="18" height="18" viewBox="0 0 24 24" fill="#444746" ><path d="M7 10l5 5 5-5z"/></svg><div style="position:absolute;left:609px;top:196px;width:1px;height:20px;background:#c7c7c7"></div><div style="position:absolute;left:621.3px;top:205.4px;width:10px;height:1.6px;background:#444746"></div><div style="position:absolute;left:641px;top:194px;width:34px;height:24px;border:1px solid #444746;border-radius:4.5px;box-sizing:border-box"></div><span class="t" style="font-family:'Liberation Sans',sans-serif;font-size:13.5px;font-weight:400;color:#444746;left:658px;top:200.05px;transform-origin:50% 50%;transform:translateX(-50%);">11</span><svg style="position:absolute;left:681.0px;top:197.5px" width="18" height="18" viewBox="0 0 24 24" fill="#444746" ><path d="M19 13h-6v6h-2v-6H5v-2h6V5h2v6h6v2z"/></svg><div style="position:absolute;left:706px;top:196px;width:1px;height:20px;background:#c7c7c7"></div><svg style="position:absolute;left:715.5px;top:197.1px" width="19" height="19" viewBox="0 0 24 24" fill="#444746" ><path d="M15.6 10.79c.97-.67 1.65-1.77 1.65-2.79 0-2.26-1.75-4-4-4H7v14h7.04c2.09 0 3.71-1.7 3.71-3.79 0-1.52-.86-2.82-2.15-3.42zM10 6.5h3c.83 0 1.5.67 1.5 1.5s-.67 1.5-1.5 1.5h-3v-3zm3.5 9H10v-3h3.5c.83 0 1.5.67 1.5 1.5s-.67 1.5-1.5 1.5z"/></svg><svg style="position:absolute;left:748.0px;top:197.6px" width="18" height="18" viewBox="0 0 24 24" fill="#444746" ><path d="M10 4v3h2.21l-3.42 8H6v3h8v-3h-2.21l3.42-8H18V4z"/></svg><svg style="position:absolute;left:780.0px;top:197.6px" width="18" height="18" viewBox="0 0 24 24" fill="#444746" ><path d="M7.24 8.75c-.26-.48-.39-1.03-.39-1.67 0-.61.13-1.16.4-1.67.26-.5.63-.93 1.11-1.29.48-.35 1.05-.63 1.7-.83.66-.19 1.39-.29 2.18-.29.81 0 1.54.11 2.21.34.66.22 1.23.54 1.69.94.47.4.83.88 1.08 1.43.25.55.38 1.15.38 1.81h-3.01c0-.31-.05-.59-.15-.85-.09-.27-.24-.49-.44-.68-.2-.19-.45-.33-.75-.44-.3-.1-.66-.16-1.06-.16-.39 0-.74.04-1.03.13-.29.09-.53.21-.72.36-.19.16-.34.34-.44.55-.1.21-.15.43-.15.66 0 .48.25.88.74 1.21.38.25.77.48 1.41.7H7.39c-.05-.08-.11-.17-.15-.25zM21 12v-2H3v2h9.62c.18.07.4.14.55.2.37.17.66.34.87.51.21.17.35.36.43.57.07.2.11.43.11.69 0 .23-.05.45-.14.66-.09.2-.23.38-.42.53-.19.15-.42.26-.71.35-.29.08-.63.13-1.01.13-.43 0-.83-.04-1.18-.13s-.66-.23-.91-.42c-.25-.19-.45-.44-.59-.75-.14-.31-.25-.76-.25-1.21H6.4c0 .55.08 1.13.24 1.58.16.45.37.85.65 1.21.28.35.6.66.98.92.37.26.78.48 1.22.65.44.17.9.3 1.38.39.48.08.96.13 1.44.13.8 0 1.53-.09 2.18-.28s1.21-.45 1.67-.79c.46-.34.82-.77 1.07-1.27s.38-1.07.38-1.71c0-.6-.1-1.14-.31-1.61-.05-.11-.11-.23-.17-.33H21z"/></svg><svg style="position:absolute;left:814.0px;top:195.4px" width="18" height="18" viewBox="0 0 24 24" fill="#444746" ><path d="M11 3L5.5 17h2.25l1.12-3h6.25l1.12 3h2.25L13 3h-2zm-1.38 9L12 5.67 14.38 12H9.62z"/></svg><div style="position:absolute;left:812px;top:213.6px;width:23.3px;height:2.2px;background:#38a852"></div><div style="position:absolute;left:843px;top:196px;width:1px;height:20px;background:#c7c7c7"></div><svg style="position:absolute;left:855.2px;top:194.2px" width="17.5" height="17.5" viewBox="0 0 24 24" fill="#444746" ><path d="M16.56 8.94L7.62 0 6.21 1.41l2.38 2.38-5.15 5.15c-.59.59-.59 1.54 0 2.12l5.5 5.5c.29.29.68.44 1.06.44s.77-.15 1.06-.44l5.5-5.5c.59-.58.59-1.53 0-2.12zM5.21 10L10 5.21 14.79 10H5.21zM19 11.5s-2 2.17-2 3.5c0 1.1.9 2 2 2s2-.9 2-2c0-1.33-2-3.5-2-3.5z"/></svg><div style="position:absolute;left:853.5px;top:212.6px;width:23px;height:3px;background:#fff"></div><svg style="position:absolute;left:888.5px;top:197.3px" width="19" height="19" viewBox="0 0 24 24" fill="#444746" ><path d="M3 3v18h18V3H3zm8 16H5v-6h6v6zm0-8H5V5h6v6zm8 8h-6v-6h6v6zm0-8h-6V5h6v6z"/></svg><svg style="position:absolute;left:922px;top:198px" width="18" height="18" viewBox="922 198 18 18" ><path d="M928.5 201H925V204.5M933.5 201H937V204.5M928.5 213H925V209.5M933.5 213H937V209.5M924 207H929.3M927.3 204.9L929.4 207L927.3 209.1M938 207H932.7M934.7 204.9L932.6 207L934.7 209.1" fill="none" stroke="#b4b8bd" stroke-width="1.5"/></svg><svg style="position:absolute;left:943.0px;top:198.7px" width="16" height="16" viewBox="0 0 24 24" fill="#b4b8bd" ><path d="M7 10l5 5 5-5z"/></svg><div style="position:absolute;left:962px;top:196px;width:1px;height:20px;background:#c7c7c7"></div><svg style="position:absolute;left:971.5px;top:198.2px" width="17" height="17" viewBox="0 0 24 24" fill="#444746" ><path d="M7 15v2h10v-2H7zm-4 6h18v-2H3v2zm0-8h18v-2H3v2zm4-6v2h10V7H7zM3 3v2h18V3H3z"/></svg><svg style="position:absolute;left:989.0px;top:197.7px" width="18" height="18" viewBox="0 0 24 24" fill="#444746" ><path d="M7 10l5 5 5-5z"/></svg><svg style="position:absolute;left:1012.0px;top:197.7px" width="18" height="18" viewBox="0 0 24 24" fill="#444746" ><path d="M16 13h-3V3h-2v10H8l4 4 4-4zM4 19v2h16v-2H4z"/></svg><svg style="position:absolute;left:1030.0px;top:197.7px" width="18" height="18" viewBox="0 0 24 24" fill="#444746" ><path d="M7 10l5 5 5-5z"/></svg><svg style="position:absolute;left:1053px;top:197.7px" width="18" height="18" viewBox="0 0 18 18" fill="none" stroke="#444746" stroke-width="1.6"><path d="M3 2.5V15.5M8 2.5V6M8 12V15.5M6.5 9H15M12 6L15 9L12 12"/></svg><svg style="position:absolute;left:1071.0px;top:197.7px" width="18" height="18" viewBox="0 0 24 24" fill="#444746" ><path d="M7 10l5 5 5-5z"/></svg><svg style="position:absolute;left:1094px;top:197.7px" width="18" height="18" viewBox="0 0 18 18" fill="none" stroke="#444746" stroke-width="1.5"><path d="M3.5 12L7.5 2L11.5 12M5 8.5H10M3 15.5H15M12.5 13L15 15.5L12.5 18"/></svg><svg style="position:absolute;left:1112.0px;top:197.7px" width="18" height="18" viewBox="0 0 24 24" fill="#444746" ><path d="M7 10l5 5 5-5z"/></svg><div style="position:absolute;left:1134px;top:196px;width:1px;height:20px;background:#c7c7c7"></div><svg style="position:absolute;left:1143.5px;top:197.2px" width="19" height="19" viewBox="0 0 24 24" fill="#b4b8bd" ><path d="M3.9 12c0-1.71 1.39-3.1 3.1-3.1h4V7H7c-2.76 0-5 2.24-5 5s2.24 5 5 5h4v-1.9H7c-1.71 0-3.1-1.39-3.1-3.1zM8 13h8v-2H8v2zm9-6h-4v1.9h4c1.71 0 3.1 1.39 3.1 3.1s-1.39 3.1-3.1 3.1h-4V17h4c2.76 0 5-2.24 5-5s-2.24-5-5-5z"/></svg><svg style="position:absolute;left:1176.0px;top:197.7px" width="18" height="18" viewBox="0 0 24 24" fill="#444746" ><path d="M20 2H4c-1.1 0-2 .9-2 2v18l4-4h14c1.1 0 2-.9 2-2V4c0-1.1-.9-2-2-2zm0 14H5.17L4 17.17V4h16v12zM11 5h2v4h4v2h-4v4h-2v-4H7V9h4z"/></svg><svg style="position:absolute;left:1208.0px;top:197.7px" width="18" height="18" viewBox="0 0 24 24" fill="#444746" ><path d="M9 17H7v-7h2v7zm4 0h-2V7h2v10zm4 0h-2v-4h2v4zm2 2H5V5h14v14zm0-16H5c-1.1 0-2 .9-2 2v14c0 1.1.9 2 2 2h14c1.1 0 2-.9 2-2V5c0-1.1-.9-2-2-2z"/></svg><svg style="position:absolute;left:1240.0px;top:197.7px" width="18" height="18" viewBox="0 0 24 24" fill="#444746" ><path d="M7 6h10l-5.01 6.3L7 6zm-2.75-.39C6.27 8.2 10 13 10 13v6c0 .55.45 1 1 1h2c.55 0 1-.45 1-1v-6s3.72-4.8 5.74-7.39c.51-.66.04-1.61-.79-1.61H5.04c-.83 0-1.3.95-.79 1.61z"/></svg><svg style="position:absolute;left:1269px;top:197.7px" width="18" height="18" viewBox="0 0 18 18" fill="none" stroke="#444746" stroke-width="1.5"><path d="M4 4V2H2V13H4"/><rect x="5" y="4" width="11" height="12" rx="1"/><path d="M5 8H16M5 12H16M8.7 8V16M12.3 8V16"/></svg><svg style="position:absolute;left:1288.0px;top:197.7px" width="18" height="18" viewBox="0 0 24 24" fill="#444746" ><path d="M7 10l5 5 5-5z"/></svg><svg style="position:absolute;left:1314.0px;top:197.7px" width="18" height="18" viewBox="0 0 24 24" fill="#444746" ><path d="M18 4H6v2l6.5 6L6 18v2h12v-3h-7l5-5-5-5h7z"/></svg><div style="position:absolute;left:1343px;top:196px;width:1px;height:20px;background:#c7c7c7"></div><span class="t" style="font-family:'Liberation Sans',sans-serif;font-size:19px;font-weight:700;color:#1f1f1f;left:1364px;top:196.5px;transform-origin:50% 50%;transform:translateX(-50%) scaleX(1.040);">ê</span><svg style="position:absolute;left:1375.0px;top:197.7px" width="18" height="18" viewBox="0 0 24 24" fill="#444746" ><path d="M7 10l5 5 5-5z"/></svg><svg style="position:absolute;left:1810.0px;top:197.0px" width="20" height="20" viewBox="0 0 24 24" fill="#444746" ><path d="M12 8l-6 6 1.41 1.41L12 10.83l4.59 4.58L18 14z"/></svg><div style="position:absolute;left:0px;top:234px;width:1864px;height:29px;background:#fff"></div><span class="t" style="font-family:'Liberation Sans',sans-serif;font-size:12px;font-weight:400;color:#1f1f1f;left:14px;top:242px;transform-origin:0 50%;transform:scaleX(0.899);">I16</span><svg style="position:absolute;left:81.0px;top:239.0px" width="18" height="18" viewBox="0 0 24 24" fill="#444746" ><path d="M7 10l5 5 5-5z"/></svg><div style="position:absolute;left:106px;top:240px;width:1px;height:17px;background:#c7c7c7"></div><span class="t" style="font-family:'Liberation Serif',serif;font-size:14px;font-weight:400;color:#80868b;left:118px;top:241.8px;transform-origin:0 50%;transform:scaleX(1.335);font-style:italic;-webkit-text-stroke:0.3px #80868b;">fx</span><div style="position:absolute;left:142px;top:240px;height:16px;font:11.85px/16px 'Liberation Mono',monospace;white-space:nowrap"><span style="color:#000">=</span><span style="color:#f7981d">G16</span><span style="color:#000">/</span><span style="color:#7e3794">D16</span><span style="color:#000">-</span><span style="color:#1155cc">1</span></div><div style="position:absolute;left:0px;top:263px;width:1852px;height:720px;background:#fff"></div><div style="position:absolute;left:46px;top:314px;width:1026px;height:23px;background:#efefef"></div><div style="position:absolute;left:46px;top:337px;width:1026px;height:21px;background:#f3f3f3"></div><div style="position:absolute;left:46px;top:387px;width:1026px;height:28px;background:#efefef"></div><div style="position:absolute;left:1072px;top:387px;width:117px;height:28px;background:#ffff00"></div><div style="position:absolute;left:46px;top:415px;width:1143px;height:23px;background:#f3f3f3"></div><div style="position:absolute;left:46px;top:461px;width:1143px;height:23px;background:#f3f3f3"></div><div style="position:absolute;left:46px;top:507px;width:1143px;height:23px;background:#f3f3f3"></div><div style="position:absolute;left:46px;top:553px;width:1143px;height:22px;background:#f3f3f3"></div><div style="position:absolute;left:46px;top:604px;width:1026px;height:27px;background:#efefef"></div><div style="position:absolute;left:46px;top:654px;width:1026px;height:23px;background:#f3f3f3"></div><div style="position:absolute;left:46px;top:700px;width:1026px;height:23px;background:#f3f3f3"></div><div style="position:absolute;left:46px;top:746px;width:1026px;height:23px;background:#f3f3f3"></div><div style="position:absolute;left:46px;top:792px;width:1026px;height:23px;background:#f3f3f3"></div><div style="position:absolute;left:46px;top:905px;width:302px;height:21px;background:#f3f3f3"></div><div style="position:absolute;left:46px;top:307px;width:1026px;height:1.3px;background:#000"></div><div style="position:absolute;left:46px;top:379px;width:1026px;height:1.3px;background:#000"></div><div style="position:absolute;left:46px;top:595px;width:1026px;height:1.3px;background:#000"></div><div style="position:absolute;left:46px;top:314px;width:1026px;height:1px;background:#b7e1a1"></div><div style="position:absolute;left:46px;top:387px;width:1026px;height:1px;background:#b7e1a1"></div><div style="position:absolute;left:46px;top:604px;width:1026px;height:1px;background:#b7e1a1"></div><div style="position:absolute;left:1071px;top:387px;width:1px;height:28px;background:#b7e1a1"></div><div style="position:absolute;left:1071px;top:604px;width:1px;height:27px;background:#b7e1a1"></div><span class="t" style="font-family:'Liberation Serif',serif;font-size:13.33px;font-weight:700;color:#000;left:48.5px;top:290.635px;transform-origin:0 50%;transform:scaleX(1.064);">Danh mục mở mới</span><span class="t" style="font-family:'Liberation Serif',serif;font-size:13.33px;font-weight:700;color:#000;left:48.5px;top:362.635px;transform-origin:0 50%;transform:scaleX(1.053);">Danh mục đang nắm giữ</span><span class="t" style="font-family:'Liberation Serif',serif;font-size:13.33px;font-weight:700;color:#000;left:48.5px;top:579.135px;transform-origin:0 50%;transform:scaleX(1.047);">Danh mục đã chốt</span><span class="t" style="font-family:'Liberation Serif',serif;font-size:14.667px;font-weight:700;color:#000;left:96.2px;top:319.066px;transform-origin:50% 50%;transform:translateX(-50%) scaleX(0.939);">STT</span><span class="t" style="font-family:'Liberation Serif',serif;font-size:14.667px;font-weight:700;color:#000;left:196.7px;top:319.066px;transform-origin:50% 50%;transform:translateX(-50%) scaleX(1.017);">Ngày mua</span><span class="t" style="font-family:'Liberation Serif',serif;font-size:14.667px;font-weight:700;color:#000;left:297.7px;top:319.066px;transform-origin:50% 50%;transform:translateX(-50%) scaleX(1.007);">Mã Cổ phiếu</span><span class="t" style="font-family:'Liberation Serif',serif;font-size:14.667px;font-weight:700;color:#000;left:410.2px;top:319.066px;transform-origin:50% 50%;transform:translateX(-50%) scaleX(1.022);">Vùng mua</span><span class="t" style="font-family:'Liberation Serif',serif;font-size:14.667px;font-weight:700;color:#000;left:534.2px;top:319.066px;transform-origin:50% 50%;transform:translateX(-50%) scaleX(1.037);">Giá hiện tại</span><span class="t" style="font-family:'Liberation Serif',serif;font-size:14.667px;font-weight:700;color:#000;left:658.2px;top:319.066px;transform-origin:50% 50%;transform:translateX(-50%) scaleX(1.051);">Giá chốt lời</span><span class="t" style="font-family:'Liberation Serif',serif;font-size:14.667px;font-weight:700;color:#000;left:778.7px;top:319.066px;transform-origin:50% 50%;transform:translateX(-50%) scaleX(1.012);">Giá cắt lỗ</span><span class="t" style="font-family:'Liberation Serif',serif;font-size:14.667px;font-weight:700;color:#000;left:954.5px;top:319.066px;transform-origin:50% 50%;transform:translateX(-50%) scaleX(1.050);">Trạng thái khuyến nghị</span><span class="t" style="font-family:'Liberation Serif',serif;font-size:14.667px;font-weight:700;color:#000;left:96.2px;top:394.066px;transform-origin:50% 50%;transform:translateX(-50%) scaleX(0.939);">STT</span><span class="t" style="font-family:'Liberation Serif',serif;font-size:14.667px;font-weight:700;color:#000;left:196.7px;top:394.066px;transform-origin:50% 50%;transform:translateX(-50%) scaleX(1.017);">Ngày mua</span><span class="t" style="font-family:'Liberation Serif',serif;font-size:14.667px;font-weight:700;color:#000;left:297.7px;top:394.066px;transform-origin:50% 50%;transform:translateX(-50%) scaleX(1.034);">Mã cổ phiếu</span><span class="t" style="font-family:'Liberation Serif',serif;font-size:14.667px;font-weight:700;color:#000;left:410.2px;top:394.066px;transform-origin:50% 50%;transform:translateX(-50%) scaleX(1.016);">Giá mua</span><span class="t" style="font-family:'Liberation Serif',serif;font-size:14.667px;font-weight:700;color:#000;left:534.2px;top:394.066px;transform-origin:50% 50%;transform:translateX(-50%) scaleX(1.051);">Giá chốt lời</span><span class="t" style="font-family:'Liberation Serif',serif;font-size:14.667px;font-weight:700;color:#000;left:658.2px;top:394.066px;transform-origin:50% 50%;transform:translateX(-50%) scaleX(1.012);">Giá cắt lỗ</span><span class="t" style="font-family:'Liberation Serif',serif;font-size:14.667px;font-weight:700;color:#000;left:778.7px;top:394.066px;transform-origin:50% 50%;transform:translateX(-50%) scaleX(1.037);">Giá hiện tại</span><span class="t" style="font-family:'Liberation Serif',serif;font-size:14.667px;font-weight:700;color:#000;left:895.7px;top:394.066px;transform-origin:50% 50%;transform:translateX(-50%) scaleX(1.037);">Tỷ trọng</span><span class="t" style="font-family:'Liberation Serif',serif;font-size:14.667px;font-weight:700;color:#000;left:1012.7px;top:394.066px;transform-origin:50% 50%;transform:translateX(-50%) scaleX(1.118);">Lãi/lỗ</span><span class="t" style="font-family:'Liberation Serif',serif;font-size:14.667px;font-weight:700;color:#000;left:96.2px;top:610.567px;transform-origin:50% 50%;transform:translateX(-50%) scaleX(0.939);">STT</span><span class="t" style="font-family:'Liberation Serif',serif;font-size:14.667px;font-weight:700;color:#000;left:196.7px;top:610.567px;transform-origin:50% 50%;transform:translateX(-50%) scaleX(1.017);">Ngày mua</span><span class="t" style="font-family:'Liberation Serif',serif;font-size:14.667px;font-weight:700;color:#000;left:297.7px;top:610.567px;transform-origin:50% 50%;transform:translateX(-50%) scaleX(1.034);">Mã cổ phiếu</span><span class="t" style="font-family:'Liberation Serif',serif;font-size:14.667px;font-weight:700;color:#000;left:410.2px;top:610.567px;transform-origin:50% 50%;transform:translateX(-50%) scaleX(1.016);">Giá mua</span><span class="t" style="font-family:'Liberation Serif',serif;font-size:14.667px;font-weight:700;color:#000;left:534.2px;top:610.567px;transform-origin:50% 50%;transform:translateX(-50%) scaleX(1.051);">Giá chốt lời</span><span class="t" style="font-family:'Liberation Serif',serif;font-size:14.667px;font-weight:700;color:#000;left:658.2px;top:610.567px;transform-origin:50% 50%;transform:translateX(-50%) scaleX(1.012);">Giá cắt lỗ</span><span class="t" style="font-family:'Liberation Serif',serif;font-size:14.667px;font-weight:700;color:#000;left:778.7px;top:610.567px;transform-origin:50% 50%;transform:translateX(-50%) scaleX(1.012);">Giá chốt</span><span class="t" style="font-family:'Liberation Serif',serif;font-size:14.667px;font-weight:700;color:#000;left:895.7px;top:610.567px;transform-origin:50% 50%;transform:translateX(-50%) scaleX(1.046);">Ngày chốt</span><span class="t" style="font-family:'Liberation Serif',serif;font-size:14.667px;font-weight:700;color:#000;left:1012.7px;top:610.567px;transform-origin:50% 50%;transform:translateX(-50%) scaleX(1.118);">Lãi/lỗ</span><span class="t" style="font-family:'Liberation Serif',serif;font-size:14.667px;font-weight:400;color:#34a853;left:96.2px;top:419.966px;transform-origin:50% 50%;transform:translateX(-50%) scaleX(1.109);-webkit-text-stroke:0.1px #34a853;">1</span><span class="t" style="font-family:'Liberation Serif',serif;font-size:14.667px;font-weight:400;color:#34a853;left:196.7px;top:419.966px;transform-origin:50% 50%;transform:translateX(-50%) scaleX(1.177);-webkit-text-stroke:0.1px #34a853;">22/10/2025</span><span class="t" style="font-family:'Liberation Serif',serif;font-size:14.667px;font-weight:700;color:#34a853;left:297.7px;top:419.966px;transform-origin:50% 50%;transform:translateX(-50%) scaleX(0.920);">CTR</span><span class="t" style="font-family:'Liberation Serif',serif;font-size:14.667px;font-weight:400;color:#34a853;left:410.2px;top:419.966px;transform-origin:50% 50%;transform:translateX(-50%) scaleX(1.067);-webkit-text-stroke:0.1px #34a853;">84.9</span><span class="t" style="font-family:'Liberation Serif',serif;font-size:14.667px;font-weight:400;color:#34a853;left:534.2px;top:419.966px;transform-origin:50% 50%;transform:translateX(-50%) scaleX(1.105);-webkit-text-stroke:0.1px #34a853;">105-110</span><span class="t" style="font-family:'Liberation Serif',serif;font-size:14.667px;font-weight:400;color:#34a853;left:658.2px;top:419.966px;transform-origin:50% 50%;transform:translateX(-50%) scaleX(1.109);-webkit-text-stroke:0.1px #34a853;">76</span><span class="t" style="font-family:'Liberation Serif',serif;font-size:14.667px;font-weight:400;color:#34a853;left:778.7px;top:419.966px;transform-origin:50% 50%;transform:translateX(-50%) scaleX(1.077);-webkit-text-stroke:0.1px #34a853;">102.6</span><span class="t" style="font-family:'Liberation Serif',serif;font-size:14.667px;font-weight:400;color:#34a853;left:895.7px;top:419.966px;transform-origin:50% 50%;transform:translateX(-50%) scaleX(1.066);-webkit-text-stroke:0.1px #34a853;">20%</span><span class="t" style="font-family:'Liberation Serif',serif;font-size:14.667px;font-weight:400;color:#34a853;left:1012.7px;top:419.966px;transform-origin:50% 50%;transform:translateX(-50%) scaleX(1.060);-webkit-text-stroke:0.1px #34a853;">20.85%</span><span class="t" style="font-family:'Liberation Serif',serif;font-size:14.667px;font-weight:400;color:#34a853;left:96.2px;top:442.966px;transform-origin:50% 50%;transform:translateX(-50%) scaleX(1.109);-webkit-text-stroke:0.1px #34a853;">2</span><span class="t" style="font-family:'Liberation Serif',serif;font-size:14.667px;font-weight:400;color:#34a853;left:196.7px;top:442.966px;transform-origin:50% 50%;transform:translateX(-50%) scaleX(1.177);-webkit-text-stroke:0.1px #34a853;">22/10/2025</span><span class="t" style="font-family:'Liberation Serif',serif;font-size:14.667px;font-weight:700;color:#34a853;left:297.7px;top:442.966px;transform-origin:50% 50%;transform:translateX(-50%) scaleX(0.920);">FPT</span><span class="t" style="font-family:'Liberation Serif',serif;font-size:14.667px;font-weight:400;color:#34a853;left:410.2px;top:442.966px;transform-origin:50% 50%;transform:translateX(-50%) scaleX(1.109);-webkit-text-stroke:0.1px #34a853;">95</span><span class="t" style="font-family:'Liberation Serif',serif;font-size:14.667px;font-weight:400;color:#34a853;left:534.2px;top:442.966px;transform-origin:50% 50%;transform:translateX(-50%) scaleX(1.105);-webkit-text-stroke:0.1px #34a853;">108-110</span><span class="t" style="font-family:'Liberation Serif',serif;font-size:14.667px;font-weight:400;color:#34a853;left:658.2px;top:442.966px;transform-origin:50% 50%;transform:translateX(-50%) scaleX(1.109);-webkit-text-stroke:0.1px #34a853;">85</span><span class="t" style="font-family:'Liberation Serif',serif;font-size:14.667px;font-weight:400;color:#34a853;left:778.7px;top:442.966px;transform-origin:50% 50%;transform:translateX(-50%) scaleX(1.109);-webkit-text-stroke:0.1px #34a853;">99</span><span class="t" style="font-family:'Liberation Serif',serif;font-size:14.667px;font-weight:400;color:#34a853;left:895.7px;top:442.966px;transform-origin:50% 50%;transform:translateX(-50%) scaleX(1.066);-webkit-text-stroke:0.1px #34a853;">20%</span><span class="t" style="font-family:'Liberation Serif',serif;font-size:14.667px;font-weight:400;color:#34a853;left:1012.7px;top:442.966px;transform-origin:50% 50%;transform:translateX(-50%) scaleX(1.051);-webkit-text-stroke:0.1px #34a853;">4.21%</span><span class="t" style="font-family:'Liberation Serif',serif;font-size:14.667px;font-weight:400;color:#ff0000;left:96.2px;top:465.966px;transform-origin:50% 50%;transform:translateX(-50%) scaleX(1.109);-webkit-text-stroke:0.1px #ff0000;">3</span><span class="t" style="font-family:'Liberation Serif',serif;font-size:14.667px;font-weight:400;color:#ff0000;left:196.7px;top:465.966px;transform-origin:50% 50%;transform:translateX(-50%) scaleX(1.177);-webkit-text-stroke:0.1px #ff0000;">19/12/2025</span><span class="t" style="font-family:'Liberation Serif',serif;font-size:14.667px;font-weight:700;color:#ff0000;left:297.7px;top:465.966px;transform-origin:50% 50%;transform:translateX(-50%) scaleX(0.920);">VNP</span><span class="t" style="font-family:'Liberation Serif',serif;font-size:14.667px;font-weight:400;color:#ff0000;left:410.2px;top:465.966px;transform-origin:50% 50%;transform:translateX(-50%) scaleX(1.067);-webkit-text-stroke:0.1px #ff0000;">21.5</span><span class="t" style="font-family:'Liberation Serif',serif;font-size:14.667px;font-weight:400;color:#ff0000;left:534.2px;top:465.966px;transform-origin:50% 50%;transform:translateX(-50%) scaleX(1.086);-webkit-text-stroke:0.1px #ff0000;">29-30</span><span class="t" style="font-family:'Liberation Serif',serif;font-size:14.667px;font-weight:400;color:#ff0000;left:658.2px;top:465.966px;transform-origin:50% 50%;transform:translateX(-50%) scaleX(1.067);-webkit-text-stroke:0.1px #ff0000;">18.2</span><span class="t" style="font-family:'Liberation Serif',serif;font-size:14.667px;font-weight:400;color:#ff0000;left:778.7px;top:465.966px;transform-origin:50% 50%;transform:translateX(-50%) scaleX(1.109);-webkit-text-stroke:0.1px #ff0000;">19</span><span class="t" style="font-family:'Liberation Serif',serif;font-size:14.667px;font-weight:400;color:#ff0000;left:895.7px;top:465.966px;transform-origin:50% 50%;transform:translateX(-50%) scaleX(1.066);-webkit-text-stroke:0.1px #ff0000;">20%</span><span class="t" style="font-family:'Liberation Serif',serif;font-size:14.667px;font-weight:400;color:#ff0000;left:1012.7px;top:465.966px;transform-origin:50% 50%;transform:translateX(-50%) scaleX(1.061);-webkit-text-stroke:0.1px #ff0000;">-11.63%</span><span class="t" style="font-family:'Liberation Serif',serif;font-size:14.667px;font-weight:400;color:#34a853;left:96.2px;top:488.966px;transform-origin:50% 50%;transform:translateX(-50%) scaleX(1.109);-webkit-text-stroke:0.1px #34a853;">4</span><span class="t" style="font-family:'Liberation Serif',serif;font-size:14.667px;font-weight:400;color:#34a853;left:196.7px;top:488.966px;transform-origin:50% 50%;transform:translateX(-50%) scaleX(1.177);-webkit-text-stroke:0.1px #34a853;">24/12/2025</span><span class="t" style="font-family:'Liberation Serif',serif;font-size:14.667px;font-weight:700;color:#34a853;left:297.7px;top:488.966px;transform-origin:50% 50%;transform:translateX(-50%) scaleX(0.920);">ACV</span><span class="t" style="font-family:'Liberation Serif',serif;font-size:14.667px;font-weight:400;color:#34a853;left:410.2px;top:488.966px;transform-origin:50% 50%;transform:translateX(-50%) scaleX(1.067);-webkit-text-stroke:0.1px #34a853;">50.5</span><span class="t" style="font-family:'Liberation Serif',serif;font-size:14.667px;font-weight:400;color:#34a853;left:534.2px;top:488.966px;transform-origin:50% 50%;transform:translateX(-50%) scaleX(1.086);-webkit-text-stroke:0.1px #34a853;">54-55</span><span class="t" style="font-family:'Liberation Serif',serif;font-size:14.667px;font-weight:400;color:#34a853;left:658.2px;top:488.966px;transform-origin:50% 50%;transform:translateX(-50%) scaleX(1.109);-webkit-text-stroke:0.1px #34a853;">44</span><span class="t" style="font-family:'Liberation Serif',serif;font-size:14.667px;font-weight:400;color:#34a853;left:778.7px;top:488.966px;transform-origin:50% 50%;transform:translateX(-50%) scaleX(1.067);-webkit-text-stroke:0.1px #34a853;">58.8</span><span class="t" style="font-family:'Liberation Serif',serif;font-size:14.667px;font-weight:400;color:#34a853;left:895.7px;top:488.966px;transform-origin:50% 50%;transform:translateX(-50%) scaleX(1.066);-webkit-text-stroke:0.1px #34a853;">20%</span><span class="t" style="font-family:'Liberation Serif',serif;font-size:14.667px;font-weight:400;color:#34a853;left:1012.7px;top:488.966px;transform-origin:50% 50%;transform:translateX(-50%) scaleX(1.060);-webkit-text-stroke:0.1px #34a853;">16.44%</span><span class="t" style="font-family:'Liberation Serif',serif;font-size:14.667px;font-weight:400;color:#34a853;left:96.2px;top:511.966px;transform-origin:50% 50%;transform:translateX(-50%) scaleX(1.109);-webkit-text-stroke:0.1px #34a853;">5</span><span class="t" style="font-family:'Liberation Serif',serif;font-size:14.667px;font-weight:400;color:#34a853;left:196.7px;top:511.966px;transform-origin:50% 50%;transform:translateX(-50%) scaleX(1.177);-webkit-text-stroke:0.1px #34a853;">07/01/2026</span><span class="t" style="font-family:'Liberation Serif',serif;font-size:14.667px;font-weight:700;color:#34a853;left:297.7px;top:511.966px;transform-origin:50% 50%;transform:translateX(-50%) scaleX(0.920);">VDS</span><span class="t" style="font-family:'Liberation Serif',serif;font-size:14.667px;font-weight:400;color:#34a853;left:410.2px;top:511.966px;transform-origin:50% 50%;transform:translateX(-50%) scaleX(1.067);-webkit-text-stroke:0.1px #34a853;">16.4</span><span class="t" style="font-family:'Liberation Serif',serif;font-size:14.667px;font-weight:400;color:#34a853;left:534.2px;top:511.966px;transform-origin:50% 50%;transform:translateX(-50%) scaleX(1.066);-webkit-text-stroke:0.1px #34a853;">19 -20</span><span class="t" style="font-family:'Liberation Serif',serif;font-size:14.667px;font-weight:400;color:#34a853;left:658.2px;top:511.966px;transform-origin:50% 50%;transform:translateX(-50%) scaleX(1.067);-webkit-text-stroke:0.1px #34a853;">14.8</span><span class="t" style="font-family:'Liberation Serif',serif;font-size:14.667px;font-weight:400;color:#34a853;left:778.7px;top:511.966px;transform-origin:50% 50%;transform:translateX(-50%) scaleX(1.077);-webkit-text-stroke:0.1px #34a853;">16.95</span><span class="t" style="font-family:'Liberation Serif',serif;font-size:14.667px;font-weight:400;color:#34a853;left:895.7px;top:511.966px;transform-origin:50% 50%;transform:translateX(-50%) scaleX(1.066);-webkit-text-stroke:0.1px #34a853;">10%</span><span class="t" style="font-family:'Liberation Serif',serif;font-size:14.667px;font-weight:400;color:#34a853;left:1012.7px;top:511.966px;transform-origin:50% 50%;transform:translateX(-50%) scaleX(1.051);-webkit-text-stroke:0.1px #34a853;">3.35%</span><span class="t" style="font-family:'Liberation Serif',serif;font-size:14.667px;font-weight:400;color:#ff0000;left:96.2px;top:534.966px;transform-origin:50% 50%;transform:translateX(-50%) scaleX(1.109);-webkit-text-stroke:0.1px #ff0000;">6</span><span class="t" style="font-family:'Liberation Serif',serif;font-size:14.667px;font-weight:400;color:#ff0000;left:196.7px;top:534.966px;transform-origin:50% 50%;transform:translateX(-50%) scaleX(1.177);-webkit-text-stroke:0.1px #ff0000;">07/01/2026</span><span class="t" style="font-family:'Liberation Serif',serif;font-size:14.667px;font-weight:700;color:#ff0000;left:297.7px;top:534.966px;transform-origin:50% 50%;transform:translateX(-50%) scaleX(0.920);">VNB</span><span class="t" style="font-family:'Liberation Serif',serif;font-size:14.667px;font-weight:400;color:#ff0000;left:410.2px;top:534.966px;transform-origin:50% 50%;transform:translateX(-50%) scaleX(1.067);-webkit-text-stroke:0.1px #ff0000;">17.3</span><span class="t" style="font-family:'Liberation Serif',serif;font-size:14.667px;font-weight:400;color:#ff0000;left:534.2px;top:534.966px;transform-origin:50% 50%;transform:translateX(-50%) scaleX(1.050);-webkit-text-stroke:0.1px #ff0000;">20 - 21</span><span class="t" style="font-family:'Liberation Serif',serif;font-size:14.667px;font-weight:400;color:#ff0000;left:658.2px;top:534.966px;transform-origin:50% 50%;transform:translateX(-50%) scaleX(1.067);-webkit-text-stroke:0.1px #ff0000;">14.7</span><span class="t" style="font-family:'Liberation Serif',serif;font-size:14.667px;font-weight:400;color:#ff0000;left:778.7px;top:534.966px;transform-origin:50% 50%;transform:translateX(-50%) scaleX(1.067);-webkit-text-stroke:0.1px #ff0000;">17.1</span><span class="t" style="font-family:'Liberation Serif',serif;font-size:14.667px;font-weight:400;color:#ff0000;left:895.7px;top:534.966px;transform-origin:50% 50%;transform:translateX(-50%) scaleX(1.066);-webkit-text-stroke:0.1px #ff0000;">10%</span><span class="t" style="font-family:'Liberation Serif',serif;font-size:14.667px;font-weight:400;color:#ff0000;left:1012.7px;top:534.966px;transform-origin:50% 50%;transform:translateX(-50%) scaleX(1.039);-webkit-text-stroke:0.1px #ff0000;">-1.16%</span><span class="t" style="font-family:'Liberation Serif',serif;font-size:14.667px;font-weight:400;color:#0fa958;left:96.2px;top:635.966px;transform-origin:50% 50%;transform:translateX(-50%) scaleX(1.109);-webkit-text-stroke:0.1px #0fa958;">1</span><span class="t" style="font-family:'Liberation Serif',serif;font-size:14.667px;font-weight:400;color:#0fa958;left:196.7px;top:635.966px;transform-origin:50% 50%;transform:translateX(-50%) scaleX(1.177);-webkit-text-stroke:0.1px #0fa958;">09/04/2025</span><span class="t" style="font-family:'Liberation Serif',serif;font-size:14.667px;font-weight:700;color:#0fa958;left:297.7px;top:635.966px;transform-origin:50% 50%;transform:translateX(-50%) scaleX(0.920);">VCI</span><span class="t" style="font-family:'Liberation Serif',serif;font-size:14.667px;font-weight:400;color:#0fa958;left:410.2px;top:635.966px;transform-origin:50% 50%;transform:translateX(-50%) scaleX(1.077);-webkit-text-stroke:0.1px #0fa958;">32.05</span><span class="t" style="font-family:'Liberation Serif',serif;font-size:14.667px;font-weight:400;color:#0fa958;left:534.2px;top:635.966px;transform-origin:50% 50%;transform:translateX(-50%) scaleX(1.109);-webkit-text-stroke:0.1px #0fa958;">38</span><span class="t" style="font-family:'Liberation Serif',serif;font-size:14.667px;font-weight:400;color:#0fa958;left:658.2px;top:635.966px;transform-origin:50% 50%;transform:translateX(-50%) scaleX(1.109);-webkit-text-stroke:0.1px #0fa958;">30</span><span class="t" style="font-family:'Liberation Serif',serif;font-size:14.667px;font-weight:400;color:#0fa958;left:778.7px;top:635.966px;transform-origin:50% 50%;transform:translateX(-50%) scaleX(1.077);-webkit-text-stroke:0.1px #0fa958;">36.75</span><span class="t" style="font-family:'Liberation Serif',serif;font-size:14.667px;font-weight:400;color:#0fa958;left:895.7px;top:635.966px;transform-origin:50% 50%;transform:translateX(-50%) scaleX(1.187);-webkit-text-stroke:0.1px #0fa958;">11/04/2025</span><span class="t" style="font-family:'Liberation Serif',serif;font-size:14.667px;font-weight:400;color:#0fa958;left:1012.7px;top:635.966px;transform-origin:50% 50%;transform:translateX(-50%) scaleX(1.066);-webkit-text-stroke:0.1px #0fa958;">15%</span><span class="t" style="font-family:'Liberation Serif',serif;font-size:14.667px;font-weight:400;color:#0fa958;left:96.2px;top:658.966px;transform-origin:50% 50%;transform:translateX(-50%) scaleX(1.109);-webkit-text-stroke:0.1px #0fa958;">2</span><span class="t" style="font-family:'Liberation Serif',serif;font-size:14.667px;font-weight:400;color:#0fa958;left:196.7px;top:658.966px;transform-origin:50% 50%;transform:translateX(-50%) scaleX(1.177);-webkit-text-stroke:0.1px #0fa958;">09/04/2025</span><span class="t" style="font-family:'Liberation Serif',serif;font-size:14.667px;font-weight:700;color:#0fa958;left:297.7px;top:658.966px;transform-origin:50% 50%;transform:translateX(-50%) scaleX(0.920);">VCB</span><span class="t" style="font-family:'Liberation Serif',serif;font-size:14.667px;font-weight:400;color:#0fa958;left:410.2px;top:658.966px;transform-origin:50% 50%;transform:translateX(-50%) scaleX(1.109);-webkit-text-stroke:0.1px #0fa958;">52</span><span class="t" style="font-family:'Liberation Serif',serif;font-size:14.667px;font-weight:400;color:#0fa958;left:534.2px;top:658.966px;transform-origin:50% 50%;transform:translateX(-50%) scaleX(1.109);-webkit-text-stroke:0.1px #0fa958;">60</span><span class="t" style="font-family:'Liberation Serif',serif;font-size:14.667px;font-weight:400;color:#0fa958;left:658.2px;top:658.966px;transform-origin:50% 50%;transform:translateX(-50%) scaleX(1.109);-webkit-text-stroke:0.1px #0fa958;">48</span><span class="t" style="font-family:'Liberation Serif',serif;font-size:14.667px;font-weight:400;color:#0fa958;left:778.7px;top:658.966px;transform-origin:50% 50%;transform:translateX(-50%) scaleX(1.067);-webkit-text-stroke:0.1px #0fa958;">59.8</span><span class="t" style="font-family:'Liberation Serif',serif;font-size:14.667px;font-weight:400;color:#0fa958;left:895.7px;top:658.966px;transform-origin:50% 50%;transform:translateX(-50%) scaleX(1.187);-webkit-text-stroke:0.1px #0fa958;">11/04/2025</span><span class="t" style="font-family:'Liberation Serif',serif;font-size:14.667px;font-weight:400;color:#0fa958;left:1012.7px;top:658.966px;transform-origin:50% 50%;transform:translateX(-50%) scaleX(1.066);-webkit-text-stroke:0.1px #0fa958;">15%</span><span class="t" style="font-family:'Liberation Serif',serif;font-size:14.667px;font-weight:400;color:#0fa958;left:96.2px;top:681.966px;transform-origin:50% 50%;transform:translateX(-50%) scaleX(1.109);-webkit-text-stroke:0.1px #0fa958;">3</span><span class="t" style="font-family:'Liberation Serif',serif;font-size:14.667px;font-weight:400;color:#0fa958;left:196.7px;top:681.966px;transform-origin:50% 50%;transform:translateX(-50%) scaleX(1.177);-webkit-text-stroke:0.1px #0fa958;">21/04/2025</span><span class="t" style="font-family:'Liberation Serif',serif;font-size:14.667px;font-weight:700;color:#0fa958;left:297.7px;top:681.966px;transform-origin:50% 50%;transform:translateX(-50%) scaleX(0.920);">HAG</span><span class="t" style="font-family:'Liberation Serif',serif;font-size:14.667px;font-weight:400;color:#0fa958;left:410.2px;top:681.966px;transform-origin:50% 50%;transform:translateX(-50%) scaleX(1.109);-webkit-text-stroke:0.1px #0fa958;">12</span><span class="t" style="font-family:'Liberation Serif',serif;font-size:14.667px;font-weight:400;color:#0fa958;left:534.2px;top:681.966px;transform-origin:50% 50%;transform:translateX(-50%) scaleX(1.109);-webkit-text-stroke:0.1px #0fa958;">14</span><span class="t" style="font-family:'Liberation Serif',serif;font-size:14.667px;font-weight:400;color:#0fa958;left:658.2px;top:681.966px;transform-origin:50% 50%;transform:translateX(-50%) scaleX(1.067);-webkit-text-stroke:0.1px #0fa958;">10.8</span><span class="t" style="font-family:'Liberation Serif',serif;font-size:14.667px;font-weight:400;color:#0fa958;left:778.7px;top:681.966px;transform-origin:50% 50%;transform:translateX(-50%) scaleX(1.067);-webkit-text-stroke:0.1px #0fa958;">13.7</span><span class="t" style="font-family:'Liberation Serif',serif;font-size:14.667px;font-weight:400;color:#0fa958;left:895.7px;top:681.966px;transform-origin:50% 50%;transform:translateX(-50%) scaleX(1.177);-webkit-text-stroke:0.1px #0fa958;">13/05/2025</span><span class="t" style="font-family:'Liberation Serif',serif;font-size:14.667px;font-weight:400;color:#0fa958;left:1012.7px;top:681.966px;transform-origin:50% 50%;transform:translateX(-50%) scaleX(1.060);-webkit-text-stroke:0.1px #0fa958;">14.17%</span><span class="t" style="font-family:'Liberation Serif',serif;font-size:14.667px;font-weight:400;color:#0fa958;left:96.2px;top:704.966px;transform-origin:50% 50%;transform:translateX(-50%) scaleX(1.109);-webkit-text-stroke:0.1px #0fa958;">4</span><span class="t" style="font-family:'Liberation Serif',serif;font-size:14.667px;font-weight:400;color:#0fa958;left:196.7px;top:704.966px;transform-origin:50% 50%;transform:translateX(-50%) scaleX(1.177);-webkit-text-stroke:0.1px #0fa958;">08/05/2025</span><span class="t" style="font-family:'Liberation Serif',serif;font-size:14.667px;font-weight:700;color:#0fa958;left:297.7px;top:704.966px;transform-origin:50% 50%;transform:translateX(-50%) scaleX(0.920);">TV2</span><span class="t" style="font-family:'Liberation Serif',serif;font-size:14.667px;font-weight:400;color:#0fa958;left:410.2px;top:704.966px;transform-origin:50% 50%;transform:translateX(-50%) scaleX(1.067);-webkit-text-stroke:0.1px #0fa958;">33.2</span><span class="t" style="font-family:'Liberation Serif',serif;font-size:14.667px;font-weight:400;color:#0fa958;left:534.2px;top:704.966px;transform-origin:50% 50%;transform:translateX(-50%) scaleX(1.086);-webkit-text-stroke:0.1px #0fa958;">36-38</span><span class="t" style="font-family:'Liberation Serif',serif;font-size:14.667px;font-weight:400;color:#0fa958;left:658.2px;top:704.966px;transform-origin:50% 50%;transform:translateX(-50%) scaleX(1.109);-webkit-text-stroke:0.1px #0fa958;">30</span><span class="t" style="font-family:'Liberation Serif',serif;font-size:14.667px;font-weight:400;color:#0fa958;left:778.7px;top:704.966px;transform-origin:50% 50%;transform:translateX(-50%) scaleX(1.109);-webkit-text-stroke:0.1px #0fa958;">40</span><span class="t" style="font-family:'Liberation Serif',serif;font-size:14.667px;font-weight:400;color:#0fa958;left:895.7px;top:704.966px;transform-origin:50% 50%;transform:translateX(-50%) scaleX(1.177);-webkit-text-stroke:0.1px #0fa958;">19/05/2025</span><span class="t" style="font-family:'Liberation Serif',serif;font-size:14.667px;font-weight:400;color:#0fa958;left:1012.7px;top:704.966px;transform-origin:50% 50%;transform:translateX(-50%) scaleX(1.060);-webkit-text-stroke:0.1px #0fa958;">17.17%</span><span class="t" style="font-family:'Liberation Serif',serif;font-size:14.667px;font-weight:400;color:#0fa958;left:96.2px;top:727.966px;transform-origin:50% 50%;transform:translateX(-50%) scaleX(1.109);-webkit-text-stroke:0.1px #0fa958;">5</span><span class="t" style="font-family:'Liberation Serif',serif;font-size:14.667px;font-weight:400;color:#0fa958;left:196.7px;top:727.966px;transform-origin:50% 50%;transform:translateX(-50%) scaleX(1.177);-webkit-text-stroke:0.1px #0fa958;">09/07/2025</span><span class="t" style="font-family:'Liberation Serif',serif;font-size:14.667px;font-weight:700;color:#0fa958;left:297.7px;top:727.966px;transform-origin:50% 50%;transform:translateX(-50%) scaleX(0.920);">VJC</span><span class="t" style="font-family:'Liberation Serif',serif;font-size:14.667px;font-weight:400;color:#0fa958;left:410.2px;top:727.966px;transform-origin:50% 50%;transform:translateX(-50%) scaleX(1.109);-webkit-text-stroke:0.1px #0fa958;">94</span><span class="t" style="font-family:'Liberation Serif',serif;font-size:14.667px;font-weight:400;color:#0fa958;left:534.2px;top:727.966px;transform-origin:50% 50%;transform:translateX(-50%) scaleX(1.093);-webkit-text-stroke:0.1px #0fa958;">104-108</span><span class="t" style="font-family:'Liberation Serif',serif;font-size:14.667px;font-weight:400;color:#0fa958;left:658.2px;top:727.966px;transform-origin:50% 50%;transform:translateX(-50%) scaleX(1.109);-webkit-text-stroke:0.1px #0fa958;">85</span><span class="t" style="font-family:'Liberation Serif',serif;font-size:14.667px;font-weight:400;color:#0fa958;left:778.7px;top:727.966px;transform-origin:50% 50%;transform:translateX(-50%) scaleX(1.077);-webkit-text-stroke:0.1px #0fa958;">127.5</span><span class="t" style="font-family:'Liberation Serif',serif;font-size:14.667px;font-weight:400;color:#0fa958;left:895.7px;top:727.966px;transform-origin:50% 50%;transform:translateX(-50%) scaleX(1.177);-webkit-text-stroke:0.1px #0fa958;">28/07/2025</span><span class="t" style="font-family:'Liberation Serif',serif;font-size:14.667px;font-weight:400;color:#0fa958;left:1012.7px;top:727.966px;transform-origin:50% 50%;transform:translateX(-50%) scaleX(1.060);-webkit-text-stroke:0.1px #0fa958;">35.64%</span><span class="t" style="font-family:'Liberation Serif',serif;font-size:14.667px;font-weight:400;color:#0fa958;left:96.2px;top:750.966px;transform-origin:50% 50%;transform:translateX(-50%) scaleX(1.109);-webkit-text-stroke:0.1px #0fa958;">6</span><span class="t" style="font-family:'Liberation Serif',serif;font-size:14.667px;font-weight:400;color:#0fa958;left:196.7px;top:750.966px;transform-origin:50% 50%;transform:translateX(-50%) scaleX(1.177);-webkit-text-stroke:0.1px #0fa958;">09/05/2025</span><span class="t" style="font-family:'Liberation Serif',serif;font-size:14.667px;font-weight:700;color:#0fa958;left:297.7px;top:750.966px;transform-origin:50% 50%;transform:translateX(-50%) scaleX(0.920);">VCB</span><span class="t" style="font-family:'Liberation Serif',serif;font-size:14.667px;font-weight:400;color:#0fa958;left:410.2px;top:750.966px;transform-origin:50% 50%;transform:translateX(-50%) scaleX(1.067);-webkit-text-stroke:0.1px #0fa958;">56.6</span><span class="t" style="font-family:'Liberation Serif',serif;font-size:14.667px;font-weight:400;color:#0fa958;left:534.2px;top:750.966px;transform-origin:50% 50%;transform:translateX(-50%) scaleX(1.086);-webkit-text-stroke:0.1px #0fa958;">62-65</span><span class="t" style="font-family:'Liberation Serif',serif;font-size:14.667px;font-weight:400;color:#0fa958;left:658.2px;top:750.966px;transform-origin:50% 50%;transform:translateX(-50%) scaleX(1.109);-webkit-text-stroke:0.1px #0fa958;">54</span><span class="t" style="font-family:'Liberation Serif',serif;font-size:14.667px;font-weight:400;color:#0fa958;left:778.7px;top:750.966px;transform-origin:50% 50%;transform:translateX(-50%) scaleX(1.067);-webkit-text-stroke:0.1px #0fa958;">62.5</span><span class="t" style="font-family:'Liberation Serif',serif;font-size:14.667px;font-weight:400;color:#0fa958;left:895.7px;top:750.966px;transform-origin:50% 50%;transform:translateX(-50%) scaleX(1.177);-webkit-text-stroke:0.1px #0fa958;">08/08/2025</span><span class="t" style="font-family:'Liberation Serif',serif;font-size:14.667px;font-weight:400;color:#0fa958;left:1012.7px;top:750.966px;transform-origin:50% 50%;transform:translateX(-50%) scaleX(1.060);-webkit-text-stroke:0.1px #0fa958;">10.42%</span><span class="t" style="font-family:'Liberation Serif',serif;font-size:14.667px;font-weight:400;color:#0fa958;left:96.2px;top:773.966px;transform-origin:50% 50%;transform:translateX(-50%) scaleX(1.109);-webkit-text-stroke:0.1px #0fa958;">7</span><span class="t" style="font-family:'Liberation Serif',serif;font-size:14.667px;font-weight:400;color:#0fa958;left:196.7px;top:773.966px;transform-origin:50% 50%;transform:translateX(-50%) scaleX(1.177);-webkit-text-stroke:0.1px #0fa958;">08/07/2025</span><span class="t" style="font-family:'Liberation Serif',serif;font-size:14.667px;font-weight:700;color:#0fa958;left:297.7px;top:773.966px;transform-origin:50% 50%;transform:translateX(-50%) scaleX(0.920);">DCM</span><span class="t" style="font-family:'Liberation Serif',serif;font-size:14.667px;font-weight:400;color:#0fa958;left:410.2px;top:773.966px;transform-origin:50% 50%;transform:translateX(-50%) scaleX(1.067);-webkit-text-stroke:0.1px #0fa958;">33.7</span><span class="t" style="font-family:'Liberation Serif',serif;font-size:14.667px;font-weight:400;color:#0fa958;left:534.2px;top:773.966px;transform-origin:50% 50%;transform:translateX(-50%) scaleX(1.086);-webkit-text-stroke:0.1px #0fa958;">37-39</span><span class="t" style="font-family:'Liberation Serif',serif;font-size:14.667px;font-weight:400;color:#0fa958;left:658.2px;top:773.966px;transform-origin:50% 50%;transform:translateX(-50%) scaleX(1.109);-webkit-text-stroke:0.1px #0fa958;">32</span><span class="t" style="font-family:'Liberation Serif',serif;font-size:14.667px;font-weight:400;color:#0fa958;left:778.7px;top:773.966px;transform-origin:50% 50%;transform:translateX(-50%) scaleX(1.067);-webkit-text-stroke:0.1px #0fa958;">39.4</span><span class="t" style="font-family:'Liberation Serif',serif;font-size:14.667px;font-weight:400;color:#0fa958;left:895.7px;top:773.966px;transform-origin:50% 50%;transform:translateX(-50%) scaleX(1.177);-webkit-text-stroke:0.1px #0fa958;">08/08/2025</span><span class="t" style="font-family:'Liberation Serif',serif;font-size:14.667px;font-weight:400;color:#0fa958;left:1012.7px;top:773.966px;transform-origin:50% 50%;transform:translateX(-50%) scaleX(1.060);-webkit-text-stroke:0.1px #0fa958;">16.91%</span><span class="t" style="font-family:'Liberation Serif',serif;font-size:14.667px;font-weight:400;color:#0fa958;left:96.2px;top:796.966px;transform-origin:50% 50%;transform:translateX(-50%) scaleX(1.109);-webkit-text-stroke:0.1px #0fa958;">8</span><span class="t" style="font-family:'Liberation Serif',serif;font-size:14.667px;font-weight:400;color:#0fa958;left:196.7px;top:796.966px;transform-origin:50% 50%;transform:translateX(-50%) scaleX(1.177);-webkit-text-stroke:0.1px #0fa958;">04/09/2025</span><span class="t" style="font-family:'Liberation Serif',serif;font-size:14.667px;font-weight:700;color:#0fa958;left:297.7px;top:796.966px;transform-origin:50% 50%;transform:translateX(-50%) scaleX(0.920);">NKG</span><span class="t" style="font-family:'Liberation Serif',serif;font-size:14.667px;font-weight:400;color:#0fa958;left:410.2px;top:796.966px;transform-origin:50% 50%;transform:translateX(-50%) scaleX(1.109);-webkit-text-stroke:0.1px #0fa958;">17</span><span class="t" style="font-family:'Liberation Serif',serif;font-size:14.667px;font-weight:400;color:#0fa958;left:534.2px;top:796.966px;transform-origin:50% 50%;transform:translateX(-50%) scaleX(1.086);-webkit-text-stroke:0.1px #0fa958;">18-21</span><span class="t" style="font-family:'Liberation Serif',serif;font-size:14.667px;font-weight:400;color:#0fa958;left:658.2px;top:796.966px;transform-origin:50% 50%;transform:translateX(-50%) scaleX(1.109);-webkit-text-stroke:0.1px #0fa958;">15</span><span class="t" style="font-family:'Liberation Serif',serif;font-size:14.667px;font-weight:400;color:#0fa958;left:778.7px;top:796.966px;transform-origin:50% 50%;transform:translateX(-50%) scaleX(1.067);-webkit-text-stroke:0.1px #0fa958;">20.2</span><span class="t" style="font-family:'Liberation Serif',serif;font-size:14.667px;font-weight:400;color:#0fa958;left:895.7px;top:796.966px;transform-origin:50% 50%;transform:translateX(-50%) scaleX(1.177);-webkit-text-stroke:0.1px #0fa958;">12/09/2025</span><span class="t" style="font-family:'Liberation Serif',serif;font-size:14.667px;font-weight:400;color:#0fa958;left:1012.7px;top:796.966px;transform-origin:50% 50%;transform:translateX(-50%) scaleX(1.060);-webkit-text-stroke:0.1px #0fa958;">18.82%</span><span class="t" style="font-family:'Liberation Serif',serif;font-size:14.667px;font-weight:400;color:#0fa958;left:96.2px;top:819.966px;transform-origin:50% 50%;transform:translateX(-50%) scaleX(1.109);-webkit-text-stroke:0.1px #0fa958;">9</span><span class="t" style="font-family:'Liberation Serif',serif;font-size:14.667px;font-weight:400;color:#0fa958;left:196.7px;top:819.966px;transform-origin:50% 50%;transform:translateX(-50%) scaleX(1.177);-webkit-text-stroke:0.1px #0fa958;">30/09/2025</span><span class="t" style="font-family:'Liberation Serif',serif;font-size:14.667px;font-weight:700;color:#0fa958;left:297.7px;top:819.966px;transform-origin:50% 50%;transform:translateX(-50%) scaleX(0.920);">AGR</span><span class="t" style="font-family:'Liberation Serif',serif;font-size:14.667px;font-weight:400;color:#0fa958;left:410.2px;top:819.966px;transform-origin:50% 50%;transform:translateX(-50%) scaleX(1.067);-webkit-text-stroke:0.1px #0fa958;">17.1</span><span class="t" style="font-family:'Liberation Serif',serif;font-size:14.667px;font-weight:400;color:#0fa958;left:534.2px;top:819.966px;transform-origin:50% 50%;transform:translateX(-50%) scaleX(1.086);-webkit-text-stroke:0.1px #0fa958;">19-20</span><span class="t" style="font-family:'Liberation Serif',serif;font-size:14.667px;font-weight:400;color:#0fa958;left:658.2px;top:819.966px;transform-origin:50% 50%;transform:translateX(-50%) scaleX(1.067);-webkit-text-stroke:0.1px #0fa958;">15.3</span><span class="t" style="font-family:'Liberation Serif',serif;font-size:14.667px;font-weight:400;color:#0fa958;left:778.7px;top:819.966px;transform-origin:50% 50%;transform:translateX(-50%) scaleX(1.067);-webkit-text-stroke:0.1px #0fa958;">18.2</span><span class="t" style="font-family:'Liberation Serif',serif;font-size:14.667px;font-weight:400;color:#0fa958;left:895.7px;top:819.966px;transform-origin:50% 50%;transform:translateX(-50%) scaleX(1.177);-webkit-text-stroke:0.1px #0fa958;">07/10/2025</span><span class="t" style="font-family:'Liberation Serif',serif;font-size:14.667px;font-weight:400;color:#0fa958;left:1012.7px;top:819.966px;transform-origin:50% 50%;transform:translateX(-50%) scaleX(1.051);-webkit-text-stroke:0.1px #0fa958;">6.43%</span><span class="t" style="font-family:'Liberation Serif',serif;font-size:14.667px;font-weight:400;color:#ff0000;left:96.2px;top:842.966px;transform-origin:50% 50%;transform:translateX(-50%) scaleX(1.109);-webkit-text-stroke:0.1px #ff0000;">10</span><span class="t" style="font-family:'Liberation Serif',serif;font-size:14.667px;font-weight:400;color:#ff0000;left:196.7px;top:842.966px;transform-origin:50% 50%;transform:translateX(-50%) scaleX(1.187);-webkit-text-stroke:0.1px #ff0000;">12/11/2025</span><span class="t" style="font-family:'Liberation Serif',serif;font-size:14.667px;font-weight:700;color:#ff0000;left:297.7px;top:842.966px;transform-origin:50% 50%;transform:translateX(-50%) scaleX(0.920);">VCI</span><span class="t" style="font-family:'Liberation Serif',serif;font-size:14.667px;font-weight:400;color:#ff0000;left:410.2px;top:842.966px;transform-origin:50% 50%;transform:translateX(-50%) scaleX(1.067);-webkit-text-stroke:0.1px #ff0000;">36.5</span><span class="t" style="font-family:'Liberation Serif',serif;font-size:14.667px;font-weight:400;color:#ff0000;left:534.2px;top:842.966px;transform-origin:50% 50%;transform:translateX(-50%) scaleX(1.086);-webkit-text-stroke:0.1px #ff0000;">44-45</span><span class="t" style="font-family:'Liberation Serif',serif;font-size:14.667px;font-weight:400;color:#ff0000;left:658.2px;top:842.966px;transform-origin:50% 50%;transform:translateX(-50%) scaleX(1.109);-webkit-text-stroke:0.1px #ff0000;">33</span><span class="t" style="font-family:'Liberation Serif',serif;font-size:14.667px;font-weight:400;color:#ff0000;left:778.7px;top:842.966px;transform-origin:50% 50%;transform:translateX(-50%) scaleX(1.109);-webkit-text-stroke:0.1px #ff0000;">33</span><span class="t" style="font-family:'Liberation Serif',serif;font-size:14.667px;font-weight:400;color:#ff0000;left:895.7px;top:842.966px;transform-origin:50% 50%;transform:translateX(-50%) scaleX(1.177);-webkit-text-stroke:0.1px #ff0000;">12/12/2025</span><span class="t" style="font-family:'Liberation Serif',serif;font-size:14.667px;font-weight:400;color:#ff0000;left:1012.7px;top:842.966px;transform-origin:50% 50%;transform:translateX(-50%) scaleX(1.039);-webkit-text-stroke:0.1px #ff0000;">-9.59%</span><span class="t" style="font-family:'Liberation Serif',serif;font-size:14.667px;font-weight:400;color:#ff0000;left:96.2px;top:865.966px;transform-origin:50% 50%;transform:translateX(-50%) scaleX(1.151);-webkit-text-stroke:0.1px #ff0000;">11</span><span class="t" style="font-family:'Liberation Serif',serif;font-size:14.667px;font-weight:400;color:#ff0000;left:196.7px;top:865.966px;transform-origin:50% 50%;transform:translateX(-50%) scaleX(1.177);-webkit-text-stroke:0.1px #ff0000;">20/08/2025</span><span class="t" style="font-family:'Liberation Serif',serif;font-size:14.667px;font-weight:700;color:#ff0000;left:297.7px;top:865.966px;transform-origin:50% 50%;transform:translateX(-50%) scaleX(0.920);">BCM</span><span class="t" style="font-family:'Liberation Serif',serif;font-size:14.667px;font-weight:400;color:#ff0000;left:410.2px;top:865.966px;transform-origin:50% 50%;transform:translateX(-50%) scaleX(1.109);-webkit-text-stroke:0.1px #ff0000;">69</span><span class="t" style="font-family:'Liberation Serif',serif;font-size:14.667px;font-weight:400;color:#ff0000;left:534.2px;top:865.966px;transform-origin:50% 50%;transform:translateX(-50%) scaleX(1.086);-webkit-text-stroke:0.1px #ff0000;">82-85</span><span class="t" style="font-family:'Liberation Serif',serif;font-size:14.667px;font-weight:400;color:#ff0000;left:658.2px;top:865.966px;transform-origin:50% 50%;transform:translateX(-50%) scaleX(1.067);-webkit-text-stroke:0.1px #ff0000;">62.1</span><span class="t" style="font-family:'Liberation Serif',serif;font-size:14.667px;font-weight:400;color:#ff0000;left:778.7px;top:865.966px;transform-origin:50% 50%;transform:translateX(-50%) scaleX(1.067);-webkit-text-stroke:0.1px #ff0000;">62.1</span><span class="t" style="font-family:'Liberation Serif',serif;font-size:14.667px;font-weight:400;color:#ff0000;left:895.7px;top:865.966px;transform-origin:50% 50%;transform:translateX(-50%) scaleX(1.177);-webkit-text-stroke:0.1px #ff0000;">18/12/2025</span><span class="t" style="font-family:'Liberation Serif',serif;font-size:14.667px;font-weight:400;color:#ff0000;left:1012.7px;top:865.966px;transform-origin:50% 50%;transform:translateX(-50%) scaleX(1.049);-webkit-text-stroke:0.1px #ff0000;">-10.00%</span><span class="t" style="font-family:'Liberation Serif',serif;font-size:14.667px;font-weight:400;color:#ff0000;left:1130.2px;top:419.866px;transform-origin:50% 50%;transform:translateX(-50%) scaleX(0.900);-webkit-text-stroke:0.2px #ff0000;">DOUBLE CHECK</span><span class="t" style="font-family:'Liberation Sans',sans-serif;font-size:13.33px;font-weight:400;color:#000;left:96.2px;top:909.635px;transform-origin:50% 50%;transform:translateX(-50%);">CANH MUA</span><span class="t" style="font-family:'Liberation Sans',sans-serif;font-size:13.33px;font-weight:400;color:#000;left:150px;top:909.635px;transform-origin:0 50%;">mua luôn &lt; giá mua gần giá hiện tại</span><span class="t" style="font-family:'Liberation Sans',sans-serif;font-size:13.33px;font-weight:400;color:#000;left:96.2px;top:930.635px;transform-origin:50% 50%;transform:translateX(-50%) scaleX(0.984);">CHỜ MUA</span><span class="t" style="font-family:'Liberation Sans',sans-serif;font-size:13.33px;font-weight:400;color:#000;left:150px;top:930.635px;transform-origin:0 50%;">Chờ mua tại giá thấp hơn</span><div style="position:absolute;left:50px;top:359px;width:1027px;height:510px;border:3px solid #ff0000;box-sizing:border-box;border-radius:2px"></div><div style="position:absolute;left:954px;top:438px;width:118px;height:24px;border:2px solid #1a73e8;box-sizing:border-box"></div><div style="position:absolute;left:1068px;top:457.8px;width:7.4px;height:7.4px;background:#1863d6;border-radius:50%"></div><div style="position:absolute;left:1289px;top:769px;width:102px;height:24px;border:2px solid #0a6b26;box-sizing:border-box"></div><div style="position:absolute;left:0px;top:263px;width:1864px;height:23px;background:#fff"></div><div style="position:absolute;left:0px;top:262.3px;width:1864px;height:1.2px;background:#c4c7c5"></div><div style="position:absolute;left:46px;top:285.5px;width:1818px;height:1px;background:#c4c7c5"></div><div style="position:absolute;left:145.5px;top:263px;width:1px;height:23px;background:#c4c7c5"></div><span class="t" style="font-family:'Liberation Sans',sans-serif;font-size:11px;font-weight:400;color:#444746;left:96.3px;top:268.7px;transform-origin:50% 50%;transform:translateX(-50%);">A</span><div style="position:absolute;left:246.5px;top:263px;width:1px;height:23px;background:#c4c7c5"></div><span class="t" style="font-family:'Liberation Sans',sans-serif;font-size:11px;font-weight:400;color:#444746;left:196.8px;top:268.7px;transform-origin:50% 50%;transform:translateX(-50%);">B</span><div style="position:absolute;left:347.5px;top:263px;width:1px;height:23px;background:#c4c7c5"></div><span class="t" style="font-family:'Liberation Sans',sans-serif;font-size:11px;font-weight:400;color:#444746;left:297.8px;top:268.7px;transform-origin:50% 50%;transform:translateX(-50%);">C</span><div style="position:absolute;left:471.5px;top:263px;width:1px;height:23px;background:#c4c7c5"></div><span class="t" style="font-family:'Liberation Sans',sans-serif;font-size:11px;font-weight:400;color:#444746;left:410.3px;top:268.7px;transform-origin:50% 50%;transform:translateX(-50%);">D</span><div style="position:absolute;left:595.5px;top:263px;width:1px;height:23px;background:#c4c7c5"></div><span class="t" style="font-family:'Liberation Sans',sans-serif;font-size:11px;font-weight:400;color:#444746;left:534.3px;top:268.7px;transform-origin:50% 50%;transform:translateX(-50%);">E</span><div style="position:absolute;left:719.5px;top:263px;width:1px;height:23px;background:#c4c7c5"></div><span class="t" style="font-family:'Liberation Sans',sans-serif;font-size:11px;font-weight:400;color:#444746;left:658.3px;top:268.7px;transform-origin:50% 50%;transform:translateX(-50%);">F</span><div style="position:absolute;left:836.5px;top:263px;width:1px;height:23px;background:#c4c7c5"></div><span class="t" style="font-family:'Liberation Sans',sans-serif;font-size:11px;font-weight:400;color:#444746;left:778.8px;top:268.7px;transform-origin:50% 50%;transform:translateX(-50%);">G</span><div style="position:absolute;left:953.5px;top:263px;width:1px;height:23px;background:#c4c7c5"></div><span class="t" style="font-family:'Liberation Sans',sans-serif;font-size:11px;font-weight:400;color:#444746;left:895.8px;top:268.7px;transform-origin:50% 50%;transform:translateX(-50%);">H</span><div style="position:absolute;left:954px;top:263px;width:117px;height:23px;background:#d3e3fd"></div><div style="position:absolute;left:1070.5px;top:263px;width:1px;height:23px;background:#c4c7c5"></div><span class="t" style="font-family:'Liberation Sans',sans-serif;font-size:11px;font-weight:700;color:#1f1f1f;left:1012.8px;top:268.7px;transform-origin:50% 50%;transform:translateX(-50%);">I</span><div style="position:absolute;left:1187.5px;top:263px;width:1px;height:23px;background:#c4c7c5"></div><span class="t" style="font-family:'Liberation Sans',sans-serif;font-size:11px;font-weight:400;color:#444746;left:1129.8px;top:268.7px;transform-origin:50% 50%;transform:translateX(-50%);">J</span><div style="position:absolute;left:1288.5px;top:263px;width:1px;height:23px;background:#c4c7c5"></div><span class="t" style="font-family:'Liberation Sans',sans-serif;font-size:11px;font-weight:400;color:#444746;left:1238.8px;top:268.7px;transform-origin:50% 50%;transform:translateX(-50%);">K</span><div style="position:absolute;left:1389.5px;top:263px;width:1px;height:23px;background:#c4c7c5"></div><span class="t" style="font-family:'Liberation Sans',sans-serif;font-size:11px;font-weight:400;color:#444746;left:1339.8px;top:268.7px;transform-origin:50% 50%;transform:translateX(-50%);">L</span><div style="position:absolute;left:1490.5px;top:263px;width:1px;height:23px;background:#c4c7c5"></div><span class="t" style="font-family:'Liberation Sans',sans-serif;font-size:11px;font-weight:400;color:#444746;left:1440.8px;top:268.7px;transform-origin:50% 50%;transform:translateX(-50%);">M</span><div style="position:absolute;left:1591.5px;top:263px;width:1px;height:23px;background:#c4c7c5"></div><span class="t" style="font-family:'Liberation Sans',sans-serif;font-size:11px;font-weight:400;color:#444746;left:1541.8px;top:268.7px;transform-origin:50% 50%;transform:translateX(-50%);">N</span><div style="position:absolute;left:1692.5px;top:263px;width:1px;height:23px;background:#c4c7c5"></div><span class="t" style="font-family:'Liberation Sans',sans-serif;font-size:11px;font-weight:400;color:#444746;left:1642.8px;top:268.7px;transform-origin:50% 50%;transform:translateX(-50%);">O</span><div style="position:absolute;left:1793.5px;top:263px;width:1px;height:23px;background:#c4c7c5"></div><span class="t" style="font-family:'Liberation Sans',sans-serif;font-size:11px;font-weight:400;color:#444746;left:1743.8px;top:268.7px;transform-origin:50% 50%;transform:translateX(-50%);">P</span><div style="position:absolute;left:1894.5px;top:263px;width:1px;height:23px;background:#c4c7c5"></div><span class="t" style="font-family:'Liberation Sans',sans-serif;font-size:11px;font-weight:400;color:#444746;left:1844.8px;top:268.7px;transform-origin:50% 50%;transform:translateX(-50%);">Q</span><div style="position:absolute;left:1852.5px;top:263.5px;width:11.5px;height:22px;background:#f5f6f7"></div><div style="position:absolute;left:0px;top:263px;width:42px;height:20px;background:#f8f9fa"></div><div style="position:absolute;left:41.5px;top:263px;width:4.5px;height:23px;background:#c0c0c0"></div><div style="position:absolute;left:0px;top:281.5px;width:46px;height:4.5px;background:#c0c0c0"></div><div style="position:absolute;left:0px;top:286px;width:46px;height:697px;background:#fff"></div><div style="position:absolute;left:45px;top:286px;width:1px;height:697px;background:#c4c7c5"></div><div style="position:absolute;left:0px;top:307.5px;width:46px;height:1px;background:#d5d5d5"></div><span class="t" style="font-family:'Liberation Sans',sans-serif;font-size:11px;font-weight:400;color:#444746;left:22.6px;top:291.6px;transform-origin:50% 50%;transform:translateX(-50%);">1</span><div style="position:absolute;left:0px;top:313.5px;width:46px;height:1px;background:#d5d5d5"></div><div style="position:absolute;left:0;top:308px;width:46px;height:5.5px;overflow:hidden"><div style="position:absolute;left:0;width:44px;top:0px;text-align:center;font:11px/14px 'Liberation Sans',sans-serif;color:#444746">2</div></div><div style="position:absolute;left:0px;top:336.5px;width:46px;height:1px;background:#d5d5d5"></div><span class="t" style="font-family:'Liberation Sans',sans-serif;font-size:11px;font-weight:400;color:#444746;left:22.6px;top:320.1px;transform-origin:50% 50%;transform:translateX(-50%);">3</span><div style="position:absolute;left:0px;top:357.5px;width:46px;height:1px;background:#d5d5d5"></div><span class="t" style="font-family:'Liberation Sans',sans-serif;font-size:11px;font-weight:400;color:#444746;left:22.6px;top:342.1px;transform-origin:50% 50%;transform:translateX(-50%);">6</span><div style="position:absolute;left:0px;top:379.5px;width:46px;height:1px;background:#d5d5d5"></div><span class="t" style="font-family:'Liberation Sans',sans-serif;font-size:11px;font-weight:400;color:#444746;left:22.6px;top:363.6px;transform-origin:50% 50%;transform:translateX(-50%);">11</span><div style="position:absolute;left:0px;top:386.5px;width:46px;height:1px;background:#d5d5d5"></div><div style="position:absolute;left:0;top:380px;width:46px;height:6.5px;overflow:hidden"><div style="position:absolute;left:0;width:44px;top:1px;text-align:center;font:11px/14px 'Liberation Sans',sans-serif;color:#444746">12</div></div><div style="position:absolute;left:0px;top:414.5px;width:46px;height:1px;background:#d5d5d5"></div><span class="t" style="font-family:'Liberation Sans',sans-serif;font-size:11px;font-weight:400;color:#444746;left:22.6px;top:395.6px;transform-origin:50% 50%;transform:translateX(-50%);">13</span><div style="position:absolute;left:0px;top:437.5px;width:46px;height:1px;background:#d5d5d5"></div><span class="t" style="font-family:'Liberation Sans',sans-serif;font-size:11px;font-weight:400;color:#444746;left:22.6px;top:421.1px;transform-origin:50% 50%;transform:translateX(-50%);">15</span><div style="position:absolute;left:0px;top:438px;width:45.5px;height:23px;background:#d3e3fd"></div><div style="position:absolute;left:0px;top:460.5px;width:46px;height:1px;background:#d5d5d5"></div><span class="t" style="font-family:'Liberation Sans',sans-serif;font-size:11px;font-weight:700;color:#1f1f1f;left:22.6px;top:444.1px;transform-origin:50% 50%;transform:translateX(-50%);">16</span><div style="position:absolute;left:0px;top:483.5px;width:46px;height:1px;background:#d5d5d5"></div><span class="t" style="font-family:'Liberation Sans',sans-serif;font-size:11px;font-weight:400;color:#444746;left:22.6px;top:467.1px;transform-origin:50% 50%;transform:translateX(-50%);">17</span><div style="position:absolute;left:0px;top:506.5px;width:46px;height:1px;background:#d5d5d5"></div><span class="t" style="font-family:'Liberation Sans',sans-serif;font-size:11px;font-weight:400;color:#444746;left:22.6px;top:490.1px;transform-origin:50% 50%;transform:translateX(-50%);">18</span><div style="position:absolute;left:0px;top:529.5px;width:46px;height:1px;background:#d5d5d5"></div><span class="t" style="font-family:'Liberation Sans',sans-serif;font-size:11px;font-weight:400;color:#444746;left:22.6px;top:513.1px;transform-origin:50% 50%;transform:translateX(-50%);">19</span><div style="position:absolute;left:0px;top:552.5px;width:46px;height:1px;background:#d5d5d5"></div><span class="t" style="font-family:'Liberation Sans',sans-serif;font-size:11px;font-weight:400;color:#444746;left:22.6px;top:536.1px;transform-origin:50% 50%;transform:translateX(-50%);">20</span><div style="position:absolute;left:0px;top:574.5px;width:46px;height:1px;background:#d5d5d5"></div><span class="t" style="font-family:'Liberation Sans',sans-serif;font-size:11px;font-weight:400;color:#444746;left:22.6px;top:558.6px;transform-origin:50% 50%;transform:translateX(-50%);">21</span><div style="position:absolute;left:0px;top:595.5px;width:46px;height:1px;background:#d5d5d5"></div><span class="t" style="font-family:'Liberation Sans',sans-serif;font-size:11px;font-weight:400;color:#444746;left:22.6px;top:580.1px;transform-origin:50% 50%;transform:translateX(-50%);">22</span><div style="position:absolute;left:0px;top:603.5px;width:46px;height:1px;background:#d5d5d5"></div><div style="position:absolute;left:0;top:596px;width:46px;height:7.5px;overflow:hidden"><div style="position:absolute;left:0;width:44px;top:2px;text-align:center;font:11px/14px 'Liberation Sans',sans-serif;color:#444746">23</div></div><div style="position:absolute;left:0px;top:630.5px;width:46px;height:1px;background:#d5d5d5"></div><span class="t" style="font-family:'Liberation Sans',sans-serif;font-size:11px;font-weight:400;color:#444746;left:22.6px;top:612.1px;transform-origin:50% 50%;transform:translateX(-50%);">24</span><div style="position:absolute;left:0px;top:653.5px;width:46px;height:1px;background:#d5d5d5"></div><span class="t" style="font-family:'Liberation Sans',sans-serif;font-size:11px;font-weight:400;color:#444746;left:22.6px;top:637.1px;transform-origin:50% 50%;transform:translateX(-50%);">25</span><div style="position:absolute;left:0px;top:676.5px;width:46px;height:1px;background:#d5d5d5"></div><span class="t" style="font-family:'Liberation Sans',sans-serif;font-size:11px;font-weight:400;color:#444746;left:22.6px;top:660.1px;transform-origin:50% 50%;transform:translateX(-50%);">26</span><div style="position:absolute;left:0px;top:699.5px;width:46px;height:1px;background:#d5d5d5"></div><span class="t" style="font-family:'Liberation Sans',sans-serif;font-size:11px;font-weight:400;color:#444746;left:22.6px;top:683.1px;transform-origin:50% 50%;transform:translateX(-50%);">27</span><div style="position:absolute;left:0px;top:722.5px;width:46px;height:1px;background:#d5d5d5"></div><span class="t" style="font-family:'Liberation Sans',sans-serif;font-size:11px;font-weight:400;color:#444746;left:22.6px;top:706.1px;transform-origin:50% 50%;transform:translateX(-50%);">28</span><div style="position:absolute;left:0px;top:745.5px;width:46px;height:1px;background:#d5d5d5"></div><span class="t" style="font-family:'Liberation Sans',sans-serif;font-size:11px;font-weight:400;color:#444746;left:22.6px;top:729.1px;transform-origin:50% 50%;transform:translateX(-50%);">29</span><div style="position:absolute;left:0px;top:768.5px;width:46px;height:1px;background:#d5d5d5"></div><span class="t" style="font-family:'Liberation Sans',sans-serif;font-size:11px;font-weight:400;color:#444746;left:22.6px;top:752.1px;transform-origin:50% 50%;transform:translateX(-50%);">30</span><div style="position:absolute;left:0px;top:791.5px;width:46px;height:1px;background:#d5d5d5"></div><span class="t" style="font-family:'Liberation Sans',sans-serif;font-size:11px;font-weight:400;color:#444746;left:22.6px;top:775.1px;transform-origin:50% 50%;transform:translateX(-50%);">31</span><div style="position:absolute;left:0px;top:814.5px;width:46px;height:1px;background:#d5d5d5"></div><span class="t" style="font-family:'Liberation Sans',sans-serif;font-size:11px;font-weight:400;color:#444746;left:22.6px;top:798.1px;transform-origin:50% 50%;transform:translateX(-50%);">32</span><div style="position:absolute;left:0px;top:837.5px;width:46px;height:1px;background:#d5d5d5"></div><span class="t" style="font-family:'Liberation Sans',sans-serif;font-size:11px;font-weight:400;color:#444746;left:22.6px;top:821.1px;transform-origin:50% 50%;transform:translateX(-50%);">33</span><div style="position:absolute;left:0px;top:860.5px;width:46px;height:1px;background:#d5d5d5"></div><span class="t" style="font-family:'Liberation Sans',sans-serif;font-size:11px;font-weight:400;color:#444746;left:22.6px;top:844.1px;transform-origin:50% 50%;transform:translateX(-50%);">34</span><div style="position:absolute;left:0px;top:883.5px;width:46px;height:1px;background:#d5d5d5"></div><span class="t" style="font-family:'Liberation Sans',sans-serif;font-size:11px;font-weight:400;color:#444746;left:22.6px;top:867.1px;transform-origin:50% 50%;transform:translateX(-50%);">35</span><div style="position:absolute;left:0px;top:904.5px;width:46px;height:1px;background:#d5d5d5"></div><span class="t" style="font-family:'Liberation Sans',sans-serif;font-size:11px;font-weight:400;color:#444746;left:22.6px;top:889.1px;transform-origin:50% 50%;transform:translateX(-50%);">36</span><div style="position:absolute;left:0px;top:925.5px;width:46px;height:1px;background:#d5d5d5"></div><span class="t" style="font-family:'Liberation Sans',sans-serif;font-size:11px;font-weight:400;color:#444746;left:22.6px;top:910.1px;transform-origin:50% 50%;transform:translateX(-50%);">37</span><div style="position:absolute;left:0px;top:946.5px;width:46px;height:1px;background:#d5d5d5"></div><span class="t" style="font-family:'Liberation Sans',sans-serif;font-size:11px;font-weight:400;color:#444746;left:22.6px;top:931.1px;transform-origin:50% 50%;transform:translateX(-50%);">38</span><div style="position:absolute;left:0px;top:967.5px;width:46px;height:1px;background:#d5d5d5"></div><span class="t" style="font-family:'Liberation Sans',sans-serif;font-size:11px;font-weight:400;color:#444746;left:22.6px;top:952.1px;transform-origin:50% 50%;transform:translateX(-50%);">39</span><div style="position:absolute;left:0px;top:988.5px;width:46px;height:1px;background:#d5d5d5"></div><div style="position:absolute;left:0;top:968px;width:46px;height:14px;overflow:hidden"><div style="position:absolute;left:0;width:45px;top:3.5px;text-align:center;font:11px/14px 'Liberation Sans',sans-serif;color:#444746">40</div></div><svg style="position:absolute;left:3.8px;top:328px" width="7" height="4"><path d="M0 4L3.5 0L7 4z" fill="#444746"/></svg><svg style="position:absolute;left:3.8px;top:343.3px" width="7" height="4"><path d="M0 0L3.5 4L7 0z" fill="#444746"/></svg><svg style="position:absolute;left:3.8px;top:348.3px" width="7" height="4"><path d="M0 4L3.5 0L7 4z" fill="#444746"/></svg><svg style="position:absolute;left:3.8px;top:364px" width="7" height="4"><path d="M0 0L3.5 4L7 0z" fill="#444746"/></svg><svg style="position:absolute;left:3.8px;top:405px" width="7" height="4"><path d="M0 4L3.5 0L7 4z" fill="#444746"/></svg><svg style="position:absolute;left:3.8px;top:421px" width="7" height="4"><path d="M0 0L3.5 4L7 0z" fill="#444746"/></svg><div style="position:absolute;left:1852px;top:286px;width:12px;height:709px;background:#fff;border-left:1px solid #e1e3e1;box-sizing:border-box"></div><div style="position:absolute;left:1854px;top:289px;width:9px;height:24px;background:#dadce0;border-radius:5px"></div><div style="position:absolute;left:0px;top:982px;width:1852px;height:13px;background:#fff;border-top:1px solid #e1e3e1;box-sizing:border-box"></div><div style="position:absolute;left:48px;top:984px;width:1159px;height:9px;background:#dadce0;border-radius:5px"></div><div style="position:absolute;left:45px;top:982px;width:1px;height:13px;background:#c4c7c5"></div><div style="position:absolute;left:1853px;top:950px;width:11px;height:32px;background:#f8f9fa"></div><div style="position:absolute;left:1852px;top:949px;width:12px;height:1px;background:#e1e3e1"></div><div style="position:absolute;left:1852px;top:965px;width:12px;height:1px;background:#e1e3e1"></div><svg style="position:absolute;left:1855px;top:955px" width="6" height="4"><path d="M0 4L3 0L6 4z" fill="#80868b"/></svg><svg style="position:absolute;left:1855px;top:972px" width="6" height="4"><path d="M0 0L3 4L6 0z" fill="#80868b"/></svg><div style="position:absolute;left:1821px;top:983px;width:31px;height:12px;background:#f8f9fa"></div><div style="position:absolute;left:1853px;top:983px;width:11px;height:12px;background:#f8f9fa"></div><div style="position:absolute;left:1821px;top:983px;width:1px;height:12px;background:#e1e3e1"></div><div style="position:absolute;left:1837px;top:983px;width:1px;height:12px;background:#e1e3e1"></div><svg style="position:absolute;left:1827px;top:985.5px" width="4" height="6"><path d="M4 0L0 3L4 6z" fill="#80868b"/></svg><svg style="position:absolute;left:1843px;top:985.5px" width="4" height="6"><path d="M0 0L4 3L0 6z" fill="#80868b"/></svg><div style="position:absolute;left:1864px;top:181px;width:56px;height:851px;background:#f9fbfd"></div><svg style="position:absolute;left:1882.6px;top:198.5px" width="19" height="19" viewBox="0 0 19 19"><rect x="0" y="0" width="19" height="19" rx="2" fill="#4285f4"/><rect x="0" y="14" width="14" height="5" fill="#34a853"/><rect x="14" y="0" width="5" height="14" fill="#fbbc04"/><path d="M14 19 L19 14 H14z" fill="#ea4335"/><path d="M0 14H5V19H2a2 2 0 0 1-2-2z" fill="#188038"/><path d="M14 0H17a2 2 0 0 1 2 2V5H14z" fill="#1967d2"/><rect x="4" y="4" width="11" height="11" fill="#fff"/></svg><span class="t" style="font-family:'Liberation Sans',sans-serif;font-size:7.5px;font-weight:700;color:#4285f4;left:1892.1px;top:204.25px;transform-origin:50% 50%;transform:translateX(-50%) scaleX(0.959);">31</span><div style="position:absolute;left:1882.6px;top:254.6px;width:19px;height:19px;background:#fbbc04;border-radius:2.5px"></div><svg style="position:absolute;left:1882.6px;top:254.6px" width="19" height="19" viewBox="0 0 19 19" fill="#fff"><circle cx="9.5" cy="8.5" r="3.6"/><rect x="7.7" y="11" width="3.6" height="2"/><rect x="7.7" y="14" width="3.6" height="1.6"/></svg><svg style="position:absolute;left:1883.2px;top:310.5px" width="19.5" height="19.5" viewBox="0 0 21 21" fill="none"><circle cx="10" cy="11" r="7.2" stroke="#2684fc" stroke-width="3"/><path d="M6.5 10.5L9.5 13.5L17.5 4" stroke="#2684fc" stroke-width="2.6" stroke-linecap="round"/><circle cx="17.5" cy="4" r="1.6" fill="#0066da"/></svg><svg style="position:absolute;left:1883.6px;top:367px" width="17.2" height="18" viewBox="0 0 19 20"><circle cx="9.5" cy="4.5" r="3.6" fill="#1a5fd8"/><path d="M2 18 V15 c0-3.5 3-5 7.5-5 s7.5 1.5 7.5 5 V18 a1 1 0 0 1 -1 1 H3 a1 1 0 0 1 -1 -1z" fill="#1a5fd8"/><path d="M13 11 c2.5 .6 4 2 4 4 V18 a1 1 0 0 1 -1 1 H13z" fill="#8ab4f8"/></svg><svg style="position:absolute;left:1885.4px;top:422.6px" width="13.8" height="18.8" viewBox="0 0 16 22"><path d="M8 0 A7.5 7.5 0 0 1 15.5 7.5 C15.5 12 10.5 15 8 21.5 C5.5 15 .5 12 .5 7.5 A7.5 7.5 0 0 1 8 0z" fill="#34a853"/><path d="M8 0 A7.5 7.5 0 0 1 15.5 7.5 c0 1.5-.5 2.8-1.3 4 L8 7.5z" fill="#4285f4"/><path d="M8 0 A7.5 7.5 0 0 0 2 3 L8 7.5 L12.5 1.5 A7.5 7.5 0 0 0 8 0z" fill="#1a73e8"/><path d="M2 3 A7.5 7.5 0 0 0 .5 7.5 c0 1.6.6 3 1.5 4.3 L8 7.5z" fill="#ea4335"/><path d="M2 11.8 L12.5 1.5 A7.5 7.5 0 0 1 14.5 4 L5 14.8z" fill="#fbbc04"/><circle cx="8" cy="7.5" r="2.6" fill="#fff"/></svg><div style="position:absolute;left:1882px;top:476px;width:20px;height:1px;background:#dadce0"></div><svg style="position:absolute;left:1880.1px;top:509.0px" width="24" height="24" viewBox="0 0 24 24" fill="#1f1f1f" ><path d="M19 13h-6v6h-2v-6H5v-2h6V5h2v6h6v2z"/></svg><svg style="position:absolute;left:1882.0px;top:994.0px" width="20" height="20" viewBox="0 0 24 24" fill="#444746" ><path d="M10 6L8.59 7.41 13.17 12l-4.58 4.59L10 18l6-6z"/></svg><div style="position:absolute;left:0px;top:995px;width:1864px;height:37px;background:#f9fbfd"></div><div style="position:absolute;left:0px;top:994.6px;width:1864px;height:1px;background:#e4e6e9"></div><svg style="position:absolute;left:52.0px;top:1006.0px" width="18" height="18" viewBox="0 0 24 24" fill="#444746" ><path d="M19 13h-6v6h-2v-6H5v-2h6V5h2v6h6v2z"/></svg><svg style="position:absolute;left:92.0px;top:1006.0px" width="18" height="18" viewBox="0 0 24 24" fill="#444746" ><path d="M3 18h18v-2H3v2zm0-5h18v-2H3v2zm0-7v2h18V6H3z"/></svg><span class="t" style="font-family:'Liberation Sans',sans-serif;font-size:14.5px;font-weight:500;color:#444746;left:146px;top:1007.75px;transform-origin:0 50%;transform:scaleX(1.061);-webkit-text-stroke:0.35px #444746;">Lịch sự kiện</span><svg style="position:absolute;left:238.0px;top:1006.0px" width="18" height="18" viewBox="0 0 24 24" fill="#444746" ><path d="M7 10l5 5 5-5z"/></svg><span class="t" style="font-family:'Liberation Sans',sans-serif;font-size:14.5px;font-weight:500;color:#444746;left:277px;top:1007.75px;transform-origin:0 50%;transform:scaleX(1.073);-webkit-text-stroke:0.35px #444746;">Sheet42</span><svg style="position:absolute;left:340.0px;top:1006.0px" width="18" height="18" viewBox="0 0 24 24" fill="#444746" ><path d="M7 10l5 5 5-5z"/></svg><span class="t" style="font-family:'Liberation Sans',sans-serif;font-size:14.5px;font-weight:500;color:#444746;left:378px;top:1007.75px;transform-origin:0 50%;transform:scaleX(1.092);-webkit-text-stroke:0.35px #444746;">Sheet40</span><svg style="position:absolute;left:443.0px;top:1006.0px" width="18" height="18" viewBox="0 0 24 24" fill="#444746" ><path d="M7 10l5 5 5-5z"/></svg><span class="t" style="font-family:'Liberation Sans',sans-serif;font-size:14.5px;font-weight:500;color:#444746;left:482px;top:1007.75px;transform-origin:0 50%;transform:scaleX(1.036);-webkit-text-stroke:0.35px #444746;">Trang 4 VN30</span><svg style="position:absolute;left:581.0px;top:1006.0px" width="18" height="18" viewBox="0 0 24 24" fill="#444746" ><path d="M7 10l5 5 5-5z"/></svg><span class="t" style="font-family:'Liberation Sans',sans-serif;font-size:14.5px;font-weight:500;color:#444746;left:620px;top:1007.75px;transform-origin:0 50%;transform:scaleX(1.048);-webkit-text-stroke:0.35px #444746;">Bảng giá</span><svg style="position:absolute;left:686.0px;top:1006.0px" width="18" height="18" viewBox="0 0 24 24" fill="#444746" ><path d="M7 10l5 5 5-5z"/></svg><span class="t" style="font-family:'Liberation Sans',sans-serif;font-size:14.5px;font-weight:500;color:#444746;left:724px;top:1007.75px;transform-origin:0 50%;transform:scaleX(1.055);-webkit-text-stroke:0.35px #444746;">Trang 5 Nước ngoài - tự doanh</span><svg style="position:absolute;left:943.0px;top:1006.0px" width="18" height="18" viewBox="0 0 24 24" fill="#444746" ><path d="M7 10l5 5 5-5z"/></svg><span class="t" style="font-family:'Liberation Sans',sans-serif;font-size:14.5px;font-weight:500;color:#444746;left:981px;top:1007.75px;transform-origin:0 50%;transform:scaleX(1.005);-webkit-text-stroke:0.35px #444746;">Trang 5 GDNN+ BASIC</span><svg style="position:absolute;left:1144.0px;top:1006.0px" width="18" height="18" viewBox="0 0 24 24" fill="#444746" ><path d="M7 10l5 5 5-5z"/></svg><span class="t" style="font-family:'Liberation Sans',sans-serif;font-size:14.5px;font-weight:500;color:#444746;left:1182px;top:1007.75px;transform-origin:0 50%;transform:scaleX(1.039);-webkit-text-stroke:0.35px #444746;">Bản tin_Danh mục Quan Tâm</span><svg style="position:absolute;left:1387.0px;top:1006.0px" width="18" height="18" viewBox="0 0 24 24" fill="#444746" ><path d="M7 10l5 5 5-5z"/></svg><div style="position:absolute;left:1412px;top:995px;width:230px;height:37px;background:#e1e9f7"></div><span class="t" style="font-family:'Liberation Sans',sans-serif;font-size:14.5px;font-weight:700;color:#0b57d0;left:1424px;top:1007.75px;transform-origin:0 50%;transform:scaleX(1.036);">Bản tin_Danh mục trading</span><svg style="position:absolute;left:1617.0px;top:1006.0px" width="18" height="18" viewBox="0 0 24 24" fill="#0b57d0" ><path d="M7 10l5 5 5-5z"/></svg><span class="t" style="font-family:'Liberation Sans',sans-serif;font-size:14.5px;font-weight:500;color:#444746;left:1654px;top:1007.75px;transform-origin:0 50%;transform:scaleX(0.974);-webkit-text-stroke:0.35px #444746;">Shee</span><div style="position:absolute;left:1688px;top:1005px;width:1px;height:20px;background:#c7c7c7"></div><svg style="position:absolute;left:1701.5px;top:1005.0px" width="20" height="20" viewBox="0 0 24 24" fill="#b4b8bd" ><path d="M15.41 7.41L14 6l-6 6 6 6 1.41-1.41L10.83 12z"/></svg><svg style="position:absolute;left:1741.0px;top:1005.0px" width="20" height="20" viewBox="0 0 24 24" fill="#444746" ><path d="M10 6L8.59 7.41 13.17 12l-4.58 4.59L10 18l6-6z"/></svg><div style="position:absolute;left:0px;top:1032px;width:1920px;height:48px;background:linear-gradient(90deg,#1c1d21 0%,#1c1e22 28%,#1b232a 40%,#1a2831 48%,#182732 62%,#15242f 100%)"></div><div style="position:absolute;left:20.6px;top:1044.8px;width:20.6px;height:20.6px;border-radius:50%;background:linear-gradient(140deg,#f6c62a 5%,#f59a1b 50%,#f1630f 95%)"></div><div style="position:absolute;left:30px;top:1038px;width:16px;height:16px;border-radius:50%;background:#c42b1c"></div><span class="t" style="font-family:'Liberation Sans',sans-serif;font-size:11px;font-weight:400;color:#fff;left:38px;top:1040.5px;transform-origin:50% 50%;transform:translateX(-50%);">3</span><span class="t" style="font-family:'Liberation Sans',sans-serif;font-size:12.3px;font-weight:400;color:#fff;left:50px;top:1042.45px;transform-origin:0 50%;transform:scaleX(0.873);-webkit-text-stroke:0.3px #fff;">15°C</span><span class="t" style="font-family:'Liberation Sans',sans-serif;font-size:12.3px;font-weight:400;color:#d6d6d6;left:50px;top:1058.45px;transform-origin:0 50%;transform:scaleX(0.968);-webkit-text-stroke:0.2px #d6d6d6;">Có nắng</span><div style="position:absolute;left:639px;top:1045px;width:11px;height:11px;background:linear-gradient(135deg,#5fd0fb,#1a9ff0)"></div><div style="position:absolute;left:651px;top:1045px;width:11px;height:11px;background:linear-gradient(135deg,#5fd0fb,#1a9ff0)"></div><div style="position:absolute;left:639px;top:1057px;width:11px;height:11px;background:linear-gradient(135deg,#5fd0fb,#1a9ff0)"></div><div style="position:absolute;left:651px;top:1057px;width:11px;height:11px;background:linear-gradient(135deg,#5fd0fb,#1a9ff0)"></div><div style="position:absolute;left:676px;top:1041px;width:217px;height:32px;background:#f4f4f4;border-radius:16px"></div><svg style="position:absolute;left:686px;top:1049px" width="16" height="16" viewBox="0 0 16 16" fill="none" stroke="#1f1f1f" stroke-width="1.6"><circle cx="6.7" cy="6.7" r="5"/><path d="M10.4 10.4L14.8 14.8" stroke-linecap="round"/></svg><span class="t" style="font-family:'Liberation Sans',sans-serif;font-size:13.5px;font-weight:400;color:#5a5a5a;left:712px;top:1049.75px;transform-origin:0 50%;transform:scaleX(0.958);">Search</span><svg style="position:absolute;left:842px;top:1044px" width="46" height="26" viewBox="0 0 46 26"><ellipse cx="23" cy="20" rx="22" ry="5" fill="#c7e4fa"/><path d="M2 20 C10 8 20 6 24 16 C30 14 40 16 44 20z" fill="#e8f3fc"/><ellipse cx="27" cy="9" rx="7.5" ry="6.5" fill="#a86a3f"/><ellipse cx="24" cy="16" rx="9" ry="6" fill="#8e5733"/><ellipse cx="28" cy="11" rx="4" ry="3" fill="#e9cfb5"/><circle cx="25" cy="7.5" r="1" fill="#222"/><circle cx="31" cy="7.5" r="1" fill="#222"/><ellipse cx="28" cy="10" rx="1.3" ry=".9" fill="#332"/></svg><div style="position:absolute;left:913px;top:1045px;width:18.5px;height:15.5px;background:#f2f2f2;border-radius:2px"></div><div style="position:absolute;left:907px;top:1050.6px;width:18px;height:16px;background:linear-gradient(180deg,#9a9a9a,#5e5e5e);border-radius:2px;opacity:.95"></div><div style="position:absolute;left:958px;top:1046px;width:17px;height:22px;background:#1490df;border-radius:2px"></div><div style="position:absolute;left:962px;top:1054px;width:14px;height:15px;background:#28a8ea;border-radius:1px"></div><div style="position:absolute;left:951px;top:1050px;width:13px;height:13px;background:#0364b8;border-radius:2px"></div><span class="t" style="font-family:'Liberation Sans',sans-serif;font-size:9.5px;font-weight:700;color:#fff;left:957.5px;top:1051.75px;transform-origin:50% 50%;transform:translateX(-50%);">O</span><div style="position:absolute;left:998px;top:1044px;width:18px;height:25px;background:#69788a;border-radius:2px"></div><div style="position:absolute;left:1000px;top:1046px;width:14px;height:6px;background:#3fb5f2"></div><div style="position:absolute;left:1000px;top:1054px;width:4px;height:4px;background:#e8eaed"></div><div style="position:absolute;left:1000px;top:1059px;width:4px;height:4px;background:#e8eaed"></div><div style="position:absolute;left:1000px;top:1064px;width:4px;height:4px;background:#e8eaed"></div><div style="position:absolute;left:1005px;top:1054px;width:4px;height:4px;background:#e8eaed"></div><div style="position:absolute;left:1005px;top:1059px;width:4px;height:4px;background:#e8eaed"></div><div style="position:absolute;left:1005px;top:1064px;width:4px;height:4px;background:#e8eaed"></div><div style="position:absolute;left:1010px;top:1054px;width:4px;height:4px;background:#e8eaed"></div><div style="position:absolute;left:1010px;top:1059px;width:4px;height:4px;background:#1b62b3"></div><div style="position:absolute;left:1010px;top:1064px;width:4px;height:4px;background:#1b62b3"></div><div style="position:absolute;left:1038px;top:1045px;width:14px;height:6px;background:#e9a825;border-radius:2px 2px 0 0"></div><div style="position:absolute;left:1038px;top:1048px;width:25px;height:19px;background:linear-gradient(180deg,#ffd75e,#f7b928);border-radius:2px"></div><div style="position:absolute;left:1044px;top:1059px;width:13px;height:8px;background:#1a74d2;border-radius:1px"></div><div style="position:absolute;left:1083px;top:1044.5px;width:24px;height:24px;border-radius:50%;background:conic-gradient(from -30deg,#ea4335 0 120deg,#fbbc04 120deg 240deg,#34a853 240deg 360deg)"></div><div style="position:absolute;left:1089.5px;top:1051px;width:11px;height:11px;border-radius:50%;background:#fff"></div><div style="position:absolute;left:1091px;top:1052.5px;width:8px;height:8px;border-radius:50%;background:#4285f4"></div><svg style="position:absolute;left:1097.5px;top:1038.5px" width="13" height="13" viewBox="0 0 100 100"><defs><clipPath id="av1104_1045"><circle cx="50" cy="50" r="50"/></clipPath></defs><g clip-path="url(#av1104_1045)"><rect width="100" height="100" fill="#1d1513"/><ellipse cx="36" cy="46" rx="27" ry="31" fill="#f0dcd0"/><path d="M12 34 C22 4 70 -6 92 28 C102 48 100 66 88 76 C84 58 76 40 56 28 C44 22 30 24 16 38z" fill="#1b1311"/><ellipse cx="72" cy="50" rx="7" ry="10" fill="#dcbcaa"/><path d="M38 66 L72 60 L78 88 L38 92z" fill="#ecd8c8"/><path d="M10 86 C28 74 42 94 56 90 C68 86 80 76 94 80 L100 100 L0 100z" fill="#da282c"/><path d="M30 70 C42 74 52 70 60 66" stroke="#d9583f" stroke-width="4" fill="none"/><path d="M44 70 L96 46" stroke="#fdfdfd" stroke-width="4.5" stroke-linecap="round"/><ellipse cx="28" cy="56" rx="7" ry="3" fill="#fbf3ee"/><circle cx="30" cy="52" r="2" fill="#3a1a1a"/></g></svg><div style="position:absolute;left:1127px;top:1044px;width:24px;height:22.5px;background:#fff;border-radius:9px;border:2px solid #1a6ff4;box-sizing:border-box"></div><svg style="position:absolute;left:1128px;top:1062px" width="8" height="7" viewBox="1128 1062 8 7" ><path d="M1130 1063 V1068 L1135.5 1065z" fill="#1a6ff4"/></svg><span class="t" style="font-family:'Liberation Sans',sans-serif;font-size:8px;font-weight:700;color:#1a6ff4;left:1139px;top:1050.6px;transform-origin:50% 50%;transform:translateX(-50%);">Zalo</span><svg style="position:absolute;left:1171px;top:1043px" width="26" height="28" viewBox="0 0 26 28" fill="none"><path d="M3 20 L11 4 Q13 1 15 4 L22 20" stroke="#22b3b8" stroke-width="3.6" stroke-linecap="round"/><path d="M7 17 C12 16 17 12 21 5" stroke="#9a3bd6" stroke-width="3" stroke-linecap="round"/></svg><span class="t" style="font-family:'Liberation Sans',sans-serif;font-size:5px;font-weight:700;color:#a03fd0;left:1184px;top:1066px;transform-origin:50% 50%;transform:translateX(-50%);">ALPHA</span><div style="position:absolute;left:1220px;top:1044.7px;width:16.3px;height:22.3px;background:linear-gradient(180deg,#5ed08a 0 33%,#2fae62 33% 66%,#15803f 66%);border-radius:2.5px"></div><div style="position:absolute;left:1228px;top:1044.7px;width:8.3px;height:7.4px;background:#8fe0a8;border-radius:0 2.5px 0 0"></div><div style="position:absolute;left:1214.8px;top:1053.6px;width:11.2px;height:11.2px;background:#107c41;border-radius:2px"></div><span class="t" style="font-family:'Liberation Sans',sans-serif;font-size:8.5px;font-weight:700;color:#fff;left:1220.4px;top:1055.25px;transform-origin:50% 50%;transform:translateX(-50%);">X</span><svg style="position:absolute;left:1258px;top:1044px" width="26" height="26" viewBox="0 0 26 26" fill="none" stroke="#8a22e0"><path d="M1 4 H14 a9 9 0 0 1 9 9 V25" stroke-width="6"/><path d="M2 14 H9 a3 3 0 0 1 3 3 V25" stroke-width="4.5"/></svg><div style="position:absolute;left:1047px;top:1071.8px;width:6px;height:2.6px;background:#8b9198;border-radius:1.3px"></div><div style="position:absolute;left:1092px;top:1071.8px;width:6px;height:2.6px;background:#8b9198;border-radius:1.3px"></div><div style="position:absolute;left:1136px;top:1071.8px;width:6px;height:2.6px;background:#8b9198;border-radius:1.3px"></div><div style="position:absolute;left:1180px;top:1071.8px;width:6px;height:2.6px;background:#8b9198;border-radius:1.3px"></div><div style="position:absolute;left:1224px;top:1071.8px;width:6px;height:2.6px;background:#8b9198;border-radius:1.3px"></div><div style="position:absolute;left:1267px;top:1071.8px;width:6px;height:2.6px;background:#8b9198;border-radius:1.3px"></div><svg style="position:absolute;left:1662px;top:1051px" width="12" height="8" fill="none" stroke="#fff" stroke-width="1.5"><path d="M1 7L6 1.5L11 7"/></svg><svg style="position:absolute;left:1691px;top:1047px" width="18" height="18" viewBox="0 0 18 18" fill="none" stroke="#fff" stroke-width="1.4"><path d="M15.5 7.5 A7 7 0 0 0 3 5.5M2.5 10.5 A7 7 0 0 0 10 16"/><path d="M15.8 3V7.5H11.5M2.2 15V10.5H6.5"/></svg><div style="position:absolute;left:1701px;top:1057px;width:9px;height:9px;background:#ff1a1a;border-radius:50%"></div><div style="position:absolute;left:1725px;top:1047px;width:15px;height:16px;background:#f5d9d6;border:1.5px solid #d93a2b;box-sizing:border-box"></div><span class="t" style="font-family:'Liberation Sans',sans-serif;font-size:13px;font-weight:700;color:#d93a2b;left:1732.5px;top:1048.5px;transform-origin:50% 50%;transform:translateX(-50%);">V</span><div style="position:absolute;left:1749px;top:1036px;width:32px;height:40px;background:#22323e;border-radius:4px"></div><svg style="position:absolute;left:1756px;top:1047px" width="18" height="18" viewBox="0 0 18 18"><path d="M1 16 C3 8 9 3 17 2 C15 9 10 14 3 15z" fill="#b37ae0"/><path d="M1 16 C6 10 11 6 17 2" stroke="#6a3aa0" stroke-width=".8" fill="none"/></svg><svg style="position:absolute;left:1788px;top:1046px" width="18" height="19" viewBox="0 0 18 19" fill="none" stroke="#fff" stroke-width="1.3"><path d="M11 2H1.5V13.5H13V9M5 17.5H10M7.5 13.5V17.5"/><rect x="12.5" y="1" width="4" height="7" rx=".8"/></svg><svg style="position:absolute;left:1812px;top:1047px" width="20" height="18" viewBox="0 0 20 18" fill="none" stroke="#fff" stroke-width="1.3"><path d="M1.5 6.5H4.5L8.5 2.5V13.5L4.5 10H1.5z"/><circle cx="14" cy="11.5" r="4"/><path d="M12.3 9.8L15.7 13.2M15.7 9.8L12.3 13.2"/></svg><span class="t" style="font-family:'Liberation Sans',sans-serif;font-size:12.3px;font-weight:400;color:#fff;right:19px;top:1042.35px;transform-origin:100% 50%;transform:scaleX(0.981);">10:03 AM</span><span class="t" style="font-family:'Liberation Sans',sans-serif;font-size:12.3px;font-weight:400;color:#fff;right:19px;top:1058.35px;transform-origin:100% 50%;transform:scaleX(1.005);">1/12/2026</span></body></html>
